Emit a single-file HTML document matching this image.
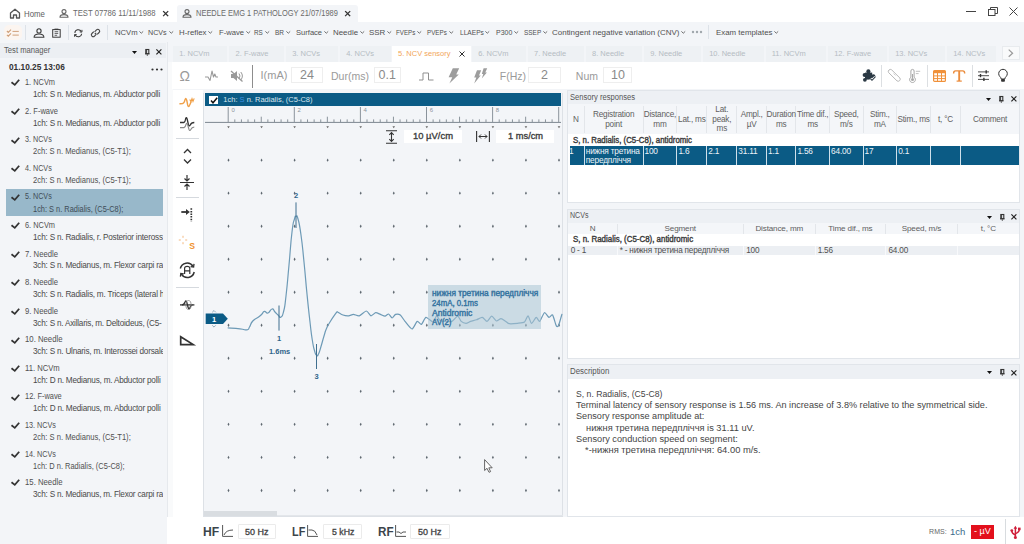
<!DOCTYPE html>
<html><head><meta charset="utf-8">
<style>
*{box-sizing:border-box;margin:0;padding:0}
html,body{width:1024px;height:544px;overflow:hidden;background:#fff;font-family:"Liberation Sans",sans-serif;color:#333}
.a{position:absolute;white-space:nowrap}
svg.a{overflow:visible}
</style></head><body>
<div class="a" style="left:0;top:0;width:1024px;height:22px;background:#fff"></div>
<svg class="a" style="left:9px;top:8px" width="12" height="11" viewBox="0 0 12 11"><path d="M1.5 5 L6 1.2 L10.5 5 V10 H7.5 V7 H4.5 V10 H1.5 Z" fill="none" stroke="#555" stroke-width="1.3" stroke-linejoin="round"/></svg>
<svg class="a" style="left:24.40px;top:4.70px" width="20.90" height="17.20" viewBox="0 0 20.90 17.20"><text x="0" y="11.68" font-family="Liberation Sans" font-size="8.6" font-weight="normal" fill="#606060" textLength="20.90" lengthAdjust="spacingAndGlyphs">Home</text></svg>
<svg class="a" style="left:58.5px;top:9.2px" width="10" height="9" viewBox="0 0 10 9"><circle cx="5" cy="2.6" r="2" fill="none" stroke="#666" stroke-width="1.1"/><path d="M1 8.3 Q1 5.6 5 5.6 Q9 5.6 9 8.3 Z" fill="none" stroke="#666" stroke-width="1.1" stroke-linejoin="round"/></svg>
<svg class="a" style="left:72.70px;top:4.90px" width="82.60" height="16.80" viewBox="0 0 82.60 16.80"><text x="0" y="11.41" font-family="Liberation Sans" font-size="8.4" font-weight="normal" fill="#6a6a6a" textLength="82.60" lengthAdjust="spacingAndGlyphs">TEST 07786 11/11/1988</text></svg>
<svg class="a" style="left:163px;top:10.5px" width="5.3" height="5.3" viewBox="0 0 10 10"><path d="M1 1 L9 9 M9 1 L1 9" stroke="#333" stroke-width="2.26" stroke-linecap="square"/></svg>
<div class="a" style="left:177px;top:5px;width:181px;height:17px;background:#f3f5f8;border-radius:3px 3px 0 0"></div>
<svg class="a" style="left:182px;top:9.2px" width="10" height="9" viewBox="0 0 10 9"><circle cx="5" cy="2.6" r="2" fill="none" stroke="#666" stroke-width="1.1"/><path d="M1 8.3 Q1 5.6 5 5.6 Q9 5.6 9 8.3 Z" fill="none" stroke="#666" stroke-width="1.1" stroke-linejoin="round"/></svg>
<svg class="a" style="left:195.60px;top:4.90px" width="141.90" height="16.80" viewBox="0 0 141.90 16.80"><text x="0" y="11.41" font-family="Liberation Sans" font-size="8.4" font-weight="normal" fill="#6a6a6a" textLength="141.90" lengthAdjust="spacingAndGlyphs">NEEDLE EMG 1 PATHOLOGY 21/07/1989</text></svg>
<svg class="a" style="left:344.8px;top:10.5px" width="5.3" height="5.3" viewBox="0 0 10 10"><path d="M1 1 L9 9 M9 1 L1 9" stroke="#333" stroke-width="2.26" stroke-linecap="square"/></svg>
<div class="a" style="left:966px;top:10.5px;width:10px;height:1px;background:#444"></div>
<svg class="a" style="left:987.5px;top:7px" width="10" height="9" viewBox="0 0 10 9"><rect x="0.5" y="2.5" width="6.5" height="6" fill="none" stroke="#444" stroke-width="1"/><path d="M2.5 2.5 V0.5 H9.5 V6.5 H7" fill="none" stroke="#444" stroke-width="1"/></svg>
<svg class="a" style="left:1009px;top:7px" width="9" height="9" viewBox="0 0 9 9"><path d="M0.5 0.5 L8.5 8.5 M8.5 0.5 L0.5 8.5" stroke="#444" stroke-width="1"/></svg>
<div class="a" style="left:0;top:22px;width:1024px;height:20px;background:#f3f5f8"></div>
<div class="a" style="left:4px;top:25px;width:18px;height:15px;border-radius:5px;background:#fcf5f0"></div>
<svg class="a" style="left:0;top:22px" width="110" height="20" viewBox="0 22 110 20"><path d="M6.9 31 L8.3 32.4 L11 29.6 M6.9 34.8 L8.3 36.2 L11 33.4" fill="none" stroke="#d0a07a" stroke-width="1.1"/><path d="M12.5 31.4 H18.8 M12.5 35.1 H18.8" stroke="#d0a07a" stroke-width="1"/><circle cx="39" cy="30.9" r="2.1" fill="none" stroke="#3a3a3a" stroke-width="1.1"/><path d="M34.1 37.3 Q34.1 34 39 34 Q43.9 34 43.9 37.3 Z" fill="none" stroke="#3a3a3a" stroke-width="1.1" stroke-linejoin="round"/><rect x="52.7" y="29.6" width="7.5" height="7.6" fill="none" stroke="#3a3a3a" stroke-width="1"/><path d="M54.5 29.3 H58.4" stroke="#3a3a3a" stroke-width="1.3"/><path d="M54.6 31.7 H58.2 M54.6 33.4 H58.2 M54.6 35.3 H57.2" stroke="#3a3a3a" stroke-width="0.8"/></svg>
<div class="a" style="left:25.4px;top:24.5px;width:1px;height:15px;background:#dde2e8"></div>
<div class="a" style="left:67.9px;top:24.5px;width:1px;height:15px;background:#dde2e8"></div>
<svg class="a" style="left:72.8px;top:29.2px" width="10.5" height="8.6" viewBox="0 0 11 10"><path d="M1.5 4.5 A4 4 0 0 1 9 3" fill="none" stroke="#333" stroke-width="1.2"/><path d="M9.5 5.5 A4 4 0 0 1 2 7" fill="none" stroke="#333" stroke-width="1.2"/><path d="M7.2 3.4 L9.8 3.6 L9.8 1" fill="none" stroke="#333" stroke-width="1.1"/><path d="M3.8 6.6 L1.2 6.4 L1.2 9" fill="none" stroke="#333" stroke-width="1.1"/></svg>
<svg class="a" style="left:89.5px;top:27.5px" width="11" height="10" viewBox="0 0 11 10"><path d="M4.8 6.2 L6.2 4.8" stroke="#444" stroke-width="1.1"/><path d="M3.8 3.6 L1.9 5.5 A1.8 1.8 0 0 0 4.5 8.1 L6.4 6.2" fill="none" stroke="#444" stroke-width="1.1"/><path d="M7.2 6.4 L9.1 4.5 A1.8 1.8 0 0 0 6.5 1.9 L4.6 3.8" fill="none" stroke="#444" stroke-width="1.1"/></svg>
<div class="a" style="left:106.7px;top:24.5px;width:1px;height:15px;background:#dde2e8"></div>
<svg class="a" style="left:114.60px;top:24.30px" width="22.60" height="15.60" viewBox="0 0 22.60 15.60"><text x="0" y="10.59" font-family="Liberation Sans" font-size="7.8" font-weight="normal" fill="#505050" textLength="22.60" lengthAdjust="spacingAndGlyphs">NCVm</text></svg>
<svg class="a" style="left:139.0px;top:31.4px" width="4.6" height="2.6" viewBox="0 0 4.6 2.6"><path d="M0.4 0.4 L2.3 2.2 L4.2 0.4" fill="none" stroke="#555" stroke-width="0.85"/></svg>
<svg class="a" style="left:148.30px;top:24.30px" width="18.70" height="15.60" viewBox="0 0 18.70 15.60"><text x="0" y="10.59" font-family="Liberation Sans" font-size="7.8" font-weight="normal" fill="#505050" textLength="18.70" lengthAdjust="spacingAndGlyphs">NCVs</text></svg>
<svg class="a" style="left:168.8px;top:31.4px" width="4.6" height="2.6" viewBox="0 0 4.6 2.6"><path d="M0.4 0.4 L2.3 2.2 L4.2 0.4" fill="none" stroke="#555" stroke-width="0.85"/></svg>
<svg class="a" style="left:179.10px;top:24.30px" width="27.50" height="15.60" viewBox="0 0 27.50 15.60"><text x="0" y="10.59" font-family="Liberation Sans" font-size="7.8" font-weight="normal" fill="#505050" textLength="27.50" lengthAdjust="spacingAndGlyphs">H-reflex</text></svg>
<svg class="a" style="left:208.4px;top:31.4px" width="4.6" height="2.6" viewBox="0 0 4.6 2.6"><path d="M0.4 0.4 L2.3 2.2 L4.2 0.4" fill="none" stroke="#555" stroke-width="0.85"/></svg>
<svg class="a" style="left:218.70px;top:24.30px" width="25.10" height="15.60" viewBox="0 0 25.10 15.60"><text x="0" y="10.59" font-family="Liberation Sans" font-size="7.8" font-weight="normal" fill="#505050" textLength="25.10" lengthAdjust="spacingAndGlyphs">F-wave</text></svg>
<svg class="a" style="left:245.6px;top:31.4px" width="4.6" height="2.6" viewBox="0 0 4.6 2.6"><path d="M0.4 0.4 L2.3 2.2 L4.2 0.4" fill="none" stroke="#555" stroke-width="0.85"/></svg>
<svg class="a" style="left:254.40px;top:24.30px" width="8.80" height="15.60" viewBox="0 0 8.80 15.60"><text x="0" y="10.59" font-family="Liberation Sans" font-size="7.8" font-weight="normal" fill="#505050" textLength="8.80" lengthAdjust="spacingAndGlyphs">RS</text></svg>
<svg class="a" style="left:265.0px;top:31.4px" width="4.6" height="2.6" viewBox="0 0 4.6 2.6"><path d="M0.4 0.4 L2.3 2.2 L4.2 0.4" fill="none" stroke="#555" stroke-width="0.85"/></svg>
<svg class="a" style="left:275.20px;top:24.30px" width="9.00" height="15.60" viewBox="0 0 9.00 15.60"><text x="0" y="10.59" font-family="Liberation Sans" font-size="7.8" font-weight="normal" fill="#505050" textLength="9.00" lengthAdjust="spacingAndGlyphs">BR</text></svg>
<svg class="a" style="left:286.0px;top:31.4px" width="4.6" height="2.6" viewBox="0 0 4.6 2.6"><path d="M0.4 0.4 L2.3 2.2 L4.2 0.4" fill="none" stroke="#555" stroke-width="0.85"/></svg>
<svg class="a" style="left:295.70px;top:24.30px" width="26.10" height="15.60" viewBox="0 0 26.10 15.60"><text x="0" y="10.59" font-family="Liberation Sans" font-size="7.8" font-weight="normal" fill="#505050" textLength="26.10" lengthAdjust="spacingAndGlyphs">Surface</text></svg>
<svg class="a" style="left:323.6px;top:31.4px" width="4.6" height="2.6" viewBox="0 0 4.6 2.6"><path d="M0.4 0.4 L2.3 2.2 L4.2 0.4" fill="none" stroke="#555" stroke-width="0.85"/></svg>
<svg class="a" style="left:333.00px;top:24.30px" width="25.10" height="15.60" viewBox="0 0 25.10 15.60"><text x="0" y="10.59" font-family="Liberation Sans" font-size="7.8" font-weight="normal" fill="#505050" textLength="25.10" lengthAdjust="spacingAndGlyphs">Needle</text></svg>
<svg class="a" style="left:359.9px;top:31.4px" width="4.6" height="2.6" viewBox="0 0 4.6 2.6"><path d="M0.4 0.4 L2.3 2.2 L4.2 0.4" fill="none" stroke="#555" stroke-width="0.85"/></svg>
<svg class="a" style="left:369.00px;top:24.30px" width="16.30" height="15.60" viewBox="0 0 16.30 15.60"><text x="0" y="10.59" font-family="Liberation Sans" font-size="7.8" font-weight="normal" fill="#505050" textLength="16.30" lengthAdjust="spacingAndGlyphs">SSR</text></svg>
<svg class="a" style="left:387.1px;top:31.4px" width="4.6" height="2.6" viewBox="0 0 4.6 2.6"><path d="M0.4 0.4 L2.3 2.2 L4.2 0.4" fill="none" stroke="#555" stroke-width="0.85"/></svg>
<svg class="a" style="left:395.50px;top:24.30px" width="19.30" height="15.60" viewBox="0 0 19.30 15.60"><text x="0" y="10.59" font-family="Liberation Sans" font-size="7.8" font-weight="normal" fill="#505050" textLength="19.30" lengthAdjust="spacingAndGlyphs">FVEPs</text></svg>
<svg class="a" style="left:416.6px;top:31.4px" width="4.6" height="2.6" viewBox="0 0 4.6 2.6"><path d="M0.4 0.4 L2.3 2.2 L4.2 0.4" fill="none" stroke="#555" stroke-width="0.85"/></svg>
<svg class="a" style="left:427.00px;top:24.30px" width="19.80" height="15.60" viewBox="0 0 19.80 15.60"><text x="0" y="10.59" font-family="Liberation Sans" font-size="7.8" font-weight="normal" fill="#505050" textLength="19.80" lengthAdjust="spacingAndGlyphs">PVEPs</text></svg>
<svg class="a" style="left:448.6px;top:31.4px" width="4.6" height="2.6" viewBox="0 0 4.6 2.6"><path d="M0.4 0.4 L2.3 2.2 L4.2 0.4" fill="none" stroke="#555" stroke-width="0.85"/></svg>
<svg class="a" style="left:459.50px;top:24.30px" width="23.90" height="15.60" viewBox="0 0 23.90 15.60"><text x="0" y="10.59" font-family="Liberation Sans" font-size="7.8" font-weight="normal" fill="#505050" textLength="23.90" lengthAdjust="spacingAndGlyphs">LLAEPs</text></svg>
<svg class="a" style="left:485.2px;top:31.4px" width="4.6" height="2.6" viewBox="0 0 4.6 2.6"><path d="M0.4 0.4 L2.3 2.2 L4.2 0.4" fill="none" stroke="#555" stroke-width="0.85"/></svg>
<svg class="a" style="left:495.50px;top:24.30px" width="16.30" height="15.60" viewBox="0 0 16.30 15.60"><text x="0" y="10.59" font-family="Liberation Sans" font-size="7.8" font-weight="normal" fill="#505050" textLength="16.30" lengthAdjust="spacingAndGlyphs">P300</text></svg>
<svg class="a" style="left:513.6px;top:31.4px" width="4.6" height="2.6" viewBox="0 0 4.6 2.6"><path d="M0.4 0.4 L2.3 2.2 L4.2 0.4" fill="none" stroke="#555" stroke-width="0.85"/></svg>
<svg class="a" style="left:524.00px;top:24.30px" width="17.20" height="15.60" viewBox="0 0 17.20 15.60"><text x="0" y="10.59" font-family="Liberation Sans" font-size="7.8" font-weight="normal" fill="#505050" textLength="17.20" lengthAdjust="spacingAndGlyphs">SSEP</text></svg>
<svg class="a" style="left:543.0px;top:31.4px" width="4.6" height="2.6" viewBox="0 0 4.6 2.6"><path d="M0.4 0.4 L2.3 2.2 L4.2 0.4" fill="none" stroke="#555" stroke-width="0.85"/></svg>
<svg class="a" style="left:552.00px;top:24.30px" width="127.50" height="15.60" viewBox="0 0 127.50 15.60"><text x="0" y="10.59" font-family="Liberation Sans" font-size="7.8" font-weight="normal" fill="#505050" textLength="127.50" lengthAdjust="spacingAndGlyphs">Contingent negative variation (CNV)</text></svg>
<svg class="a" style="left:681.3px;top:31.4px" width="4.6" height="2.6" viewBox="0 0 4.6 2.6"><path d="M0.4 0.4 L2.3 2.2 L4.2 0.4" fill="none" stroke="#555" stroke-width="0.85"/></svg>
<svg class="a" style="left:716.00px;top:24.30px" width="56.50" height="15.60" viewBox="0 0 56.50 15.60"><text x="0" y="10.59" font-family="Liberation Sans" font-size="7.8" font-weight="normal" fill="#505050" textLength="56.50" lengthAdjust="spacingAndGlyphs">Exam templates</text></svg>
<svg class="a" style="left:774.3px;top:31.4px" width="4.6" height="2.6" viewBox="0 0 4.6 2.6"><path d="M0.4 0.4 L2.3 2.2 L4.2 0.4" fill="none" stroke="#555" stroke-width="0.85"/></svg>
<svg class="a" style="left:690.5px;top:30px" width="12" height="4" viewBox="0 0 12 4"><circle cx="2" cy="2" r="1.2" fill="#a0a7ad"/><circle cx="6" cy="2" r="1.2" fill="#a0a7ad"/><circle cx="10" cy="2" r="1.2" fill="#a0a7ad"/></svg>
<div class="a" style="left:708px;top:25px;width:1px;height:14px;background:#dde2e8"></div>
<div class="a" style="left:0;top:42px;width:167.5px;height:502px;background:#f3f5f8;border-right:1px solid #e6e9ed"></div>
<div class="a" style="left:0;top:43px;width:166px;height:15px;background:#eceff3"></div>
<svg class="a" style="left:3.50px;top:41.90px" width="46.30" height="16.80" viewBox="0 0 46.30 16.80"><text x="0" y="11.41" font-family="Liberation Sans" font-size="8.4" font-weight="normal" fill="#5a5a5a" textLength="46.30" lengthAdjust="spacingAndGlyphs">Test manager</text></svg>
<svg class="a" style="left:132.0px;top:50.5px" width="5" height="3" viewBox="0 0 5 3"><path d="M0 0 H5 L2.5 3 Z" fill="#111"/></svg><svg class="a" style="left:144.8px;top:48.8px" width="4.6" height="7" viewBox="0 0 4.6 7"><rect x="0.8" y="0.5" width="3" height="4.2" fill="none" stroke="#333" stroke-width="1.1"/><path d="M0 4.8 H4.6" stroke="#333" stroke-width="0.9"/><path d="M2.3 4.8 V7" stroke="#555" stroke-width="0.9"/><path d="M1.6 1 V4.5" stroke="#333" stroke-width="0.9"/></svg><svg class="a" style="left:156.4px;top:49.1px" width="5.8" height="5.8" viewBox="0 0 5.8 5.8"><path d="M0.4 0.4 L5.4 5.4 M5.4 0.4 L0.4 5.4" stroke="#222" stroke-width="1.15"/></svg>
<div class="a" style="left:9px;top:63.02px;font-size:8.3px;line-height:9.96px;color:#333;font-weight:bold;">01.10.25 13:06</div>
<svg class="a" style="left:150.5px;top:67.5px" width="12" height="3" viewBox="0 0 12 3"><circle cx="1.5" cy="1.5" r="1.1" fill="#333"/><circle cx="6" cy="1.5" r="1.1" fill="#333"/><circle cx="10.5" cy="1.5" r="1.1" fill="#333"/></svg>
<svg class="a" style="left:0;top:72.40px" width="24" height="20" viewBox="0 72.40 24 20"><path d="M11.5 82.60 L14.8 85.30 L19.2 80.10" fill="none" stroke="#333" stroke-width="1.75"/></svg>
<svg class="a" style="left:24.50px;top:74.20px" width="30.00" height="16.40" viewBox="0 0 30.00 16.40"><text x="0" y="11.14" font-family="Liberation Sans" font-size="8.2" font-weight="normal" fill="#505050" textLength="30.00" lengthAdjust="spacingAndGlyphs">1. NCVm</text></svg>
<div class="a" style="left:33px;top:89.0px;width:129.6px;overflow:hidden;font-size:8.2px;letter-spacing:-0.22px;line-height:11px;color:#4a4a4a">1ch: S n. Medianus, m. Abductor polli</div>
<svg class="a" style="left:0;top:100.97px" width="24" height="20" viewBox="0 100.97 24 20"><path d="M11.5 111.17 L14.8 113.87 L19.2 108.67" fill="none" stroke="#333" stroke-width="1.75"/></svg>
<svg class="a" style="left:24.50px;top:102.77px" width="33.00" height="16.40" viewBox="0 0 33.00 16.40"><text x="0" y="11.14" font-family="Liberation Sans" font-size="8.2" font-weight="normal" fill="#505050" textLength="33.00" lengthAdjust="spacingAndGlyphs">2. F-wave</text></svg>
<div class="a" style="left:33px;top:117.6px;width:129.6px;overflow:hidden;font-size:8.2px;letter-spacing:-0.22px;line-height:11px;color:#4a4a4a">1ch: S n. Medianus, m. Abductor polli</div>
<svg class="a" style="left:0;top:129.54px" width="24" height="20" viewBox="0 129.54 24 20"><path d="M11.5 139.74 L14.8 142.44 L19.2 137.24" fill="none" stroke="#333" stroke-width="1.75"/></svg>
<svg class="a" style="left:24.50px;top:131.34px" width="26.75" height="16.40" viewBox="0 0 26.75 16.40"><text x="0" y="11.14" font-family="Liberation Sans" font-size="8.2" font-weight="normal" fill="#505050" textLength="26.75" lengthAdjust="spacingAndGlyphs">3. NCVs</text></svg>
<svg class="a" style="left:32.70px;top:143.44px" width="97.80" height="16.40" viewBox="0 0 97.80 16.40"><text x="0" y="11.14" font-family="Liberation Sans" font-size="8.2" font-weight="normal" fill="#505050" textLength="97.80" lengthAdjust="spacingAndGlyphs">2ch: S n. Medianus, (C5-T1);</text></svg>
<svg class="a" style="left:0;top:158.11px" width="24" height="20" viewBox="0 158.11 24 20"><path d="M11.5 168.31 L14.8 171.01 L19.2 165.81" fill="none" stroke="#333" stroke-width="1.75"/></svg>
<svg class="a" style="left:24.50px;top:159.91px" width="26.75" height="16.40" viewBox="0 0 26.75 16.40"><text x="0" y="11.14" font-family="Liberation Sans" font-size="8.2" font-weight="normal" fill="#505050" textLength="26.75" lengthAdjust="spacingAndGlyphs">4. NCVs</text></svg>
<svg class="a" style="left:32.70px;top:172.01px" width="97.80" height="16.40" viewBox="0 0 97.80 16.40"><text x="0" y="11.14" font-family="Liberation Sans" font-size="8.2" font-weight="normal" fill="#505050" textLength="97.80" lengthAdjust="spacingAndGlyphs">2ch: S n. Medianus, (C5-T1);</text></svg>
<div class="a" style="left:6px;top:189.3px;width:156.7px;height:26.6px;background:#98b8ca"></div>
<svg class="a" style="left:0;top:186.68px" width="24" height="20" viewBox="0 186.68 24 20"><path d="M11.5 196.88 L14.8 199.58 L19.2 194.38" fill="none" stroke="#333" stroke-width="1.75"/></svg>
<svg class="a" style="left:24.50px;top:188.48px" width="26.75" height="16.40" viewBox="0 0 26.75 16.40"><text x="0" y="11.14" font-family="Liberation Sans" font-size="8.2" font-weight="normal" fill="#3f4d57" textLength="26.75" lengthAdjust="spacingAndGlyphs">5. NCVs</text></svg>
<svg class="a" style="left:32.70px;top:200.58px" width="90.30" height="16.40" viewBox="0 0 90.30 16.40"><text x="0" y="11.14" font-family="Liberation Sans" font-size="8.2" font-weight="normal" fill="#3f4d57" textLength="90.30" lengthAdjust="spacingAndGlyphs">1ch: S n. Radialis, (C5-C8);</text></svg>
<svg class="a" style="left:0;top:215.25px" width="24" height="20" viewBox="0 215.25 24 20"><path d="M11.5 225.45 L14.8 228.15 L19.2 222.95" fill="none" stroke="#333" stroke-width="1.75"/></svg>
<svg class="a" style="left:24.50px;top:217.05px" width="30.00" height="16.40" viewBox="0 0 30.00 16.40"><text x="0" y="11.14" font-family="Liberation Sans" font-size="8.2" font-weight="normal" fill="#505050" textLength="30.00" lengthAdjust="spacingAndGlyphs">6. NCVm</text></svg>
<div class="a" style="left:33px;top:231.8px;width:129.6px;overflow:hidden;font-size:8.2px;letter-spacing:-0.22px;line-height:11px;color:#4a4a4a">1ch: S n. Radialis, r. Posterior inteross</div>
<svg class="a" style="left:0;top:243.82px" width="24" height="20" viewBox="0 243.82 24 20"><path d="M11.5 254.02 L14.8 256.72 L19.2 251.52" fill="none" stroke="#333" stroke-width="1.75"/></svg>
<svg class="a" style="left:24.50px;top:245.62px" width="33.00" height="16.40" viewBox="0 0 33.00 16.40"><text x="0" y="11.14" font-family="Liberation Sans" font-size="8.2" font-weight="normal" fill="#505050" textLength="33.00" lengthAdjust="spacingAndGlyphs">7. Needle</text></svg>
<div class="a" style="left:33px;top:260.4px;width:129.6px;overflow:hidden;font-size:8.2px;letter-spacing:-0.22px;line-height:11px;color:#4a4a4a">3ch: S n. Medianus, m. Flexor carpi ra</div>
<svg class="a" style="left:0;top:272.39px" width="24" height="20" viewBox="0 272.39 24 20"><path d="M11.5 282.59 L14.8 285.29 L19.2 280.09" fill="none" stroke="#333" stroke-width="1.75"/></svg>
<svg class="a" style="left:24.50px;top:274.19px" width="33.00" height="16.40" viewBox="0 0 33.00 16.40"><text x="0" y="11.14" font-family="Liberation Sans" font-size="8.2" font-weight="normal" fill="#505050" textLength="33.00" lengthAdjust="spacingAndGlyphs">8. Needle</text></svg>
<div class="a" style="left:33px;top:289.0px;width:129.6px;overflow:hidden;font-size:8.2px;letter-spacing:-0.22px;line-height:11px;color:#4a4a4a">3ch: S n. Radialis, m. Triceps (lateral h</div>
<svg class="a" style="left:0;top:300.96px" width="24" height="20" viewBox="0 300.96 24 20"><path d="M11.5 311.16 L14.8 313.86 L19.2 308.66" fill="none" stroke="#333" stroke-width="1.75"/></svg>
<svg class="a" style="left:24.50px;top:302.76px" width="33.00" height="16.40" viewBox="0 0 33.00 16.40"><text x="0" y="11.14" font-family="Liberation Sans" font-size="8.2" font-weight="normal" fill="#505050" textLength="33.00" lengthAdjust="spacingAndGlyphs">9. Needle</text></svg>
<div class="a" style="left:33px;top:317.6px;width:129.6px;overflow:hidden;font-size:8.2px;letter-spacing:-0.22px;line-height:11px;color:#4a4a4a">3ch: S n. Axillaris, m. Deltoideus, (C5-</div>
<svg class="a" style="left:0;top:329.53px" width="24" height="20" viewBox="0 329.53 24 20"><path d="M11.5 339.73 L14.8 342.43 L19.2 337.23" fill="none" stroke="#333" stroke-width="1.75"/></svg>
<svg class="a" style="left:24.50px;top:331.33px" width="37.50" height="16.40" viewBox="0 0 37.50 16.40"><text x="0" y="11.14" font-family="Liberation Sans" font-size="8.2" font-weight="normal" fill="#505050" textLength="37.50" lengthAdjust="spacingAndGlyphs">10. Needle</text></svg>
<div class="a" style="left:33px;top:346.1px;width:129.6px;overflow:hidden;font-size:8.2px;letter-spacing:-0.22px;line-height:11px;color:#4a4a4a">3ch: S n. Ulnaris, m. Interossei dorsale</div>
<svg class="a" style="left:0;top:358.10px" width="24" height="20" viewBox="0 358.10 24 20"><path d="M11.5 368.30 L14.8 371.00 L19.2 365.80" fill="none" stroke="#333" stroke-width="1.75"/></svg>
<svg class="a" style="left:24.50px;top:359.90px" width="34.75" height="16.40" viewBox="0 0 34.75 16.40"><text x="0" y="11.14" font-family="Liberation Sans" font-size="8.2" font-weight="normal" fill="#505050" textLength="34.75" lengthAdjust="spacingAndGlyphs">11. NCVm</text></svg>
<div class="a" style="left:33px;top:374.7px;width:129.6px;overflow:hidden;font-size:8.2px;letter-spacing:-0.22px;line-height:11px;color:#4a4a4a">1ch: D n. Medianus, m. Abductor polli</div>
<svg class="a" style="left:0;top:386.67px" width="24" height="20" viewBox="0 386.67 24 20"><path d="M11.5 396.87 L14.8 399.57 L19.2 394.37" fill="none" stroke="#333" stroke-width="1.75"/></svg>
<svg class="a" style="left:24.50px;top:388.47px" width="36.75" height="16.40" viewBox="0 0 36.75 16.40"><text x="0" y="11.14" font-family="Liberation Sans" font-size="8.2" font-weight="normal" fill="#505050" textLength="36.75" lengthAdjust="spacingAndGlyphs">12. F-wave</text></svg>
<div class="a" style="left:33px;top:403.3px;width:129.6px;overflow:hidden;font-size:8.2px;letter-spacing:-0.22px;line-height:11px;color:#4a4a4a">1ch: D n. Medianus, m. Abductor polli</div>
<svg class="a" style="left:0;top:415.24px" width="24" height="20" viewBox="0 415.24 24 20"><path d="M11.5 425.44 L14.8 428.14 L19.2 422.94" fill="none" stroke="#333" stroke-width="1.75"/></svg>
<svg class="a" style="left:24.50px;top:417.04px" width="31.00" height="16.40" viewBox="0 0 31.00 16.40"><text x="0" y="11.14" font-family="Liberation Sans" font-size="8.2" font-weight="normal" fill="#505050" textLength="31.00" lengthAdjust="spacingAndGlyphs">13. NCVs</text></svg>
<svg class="a" style="left:32.70px;top:429.14px" width="97.80" height="16.40" viewBox="0 0 97.80 16.40"><text x="0" y="11.14" font-family="Liberation Sans" font-size="8.2" font-weight="normal" fill="#505050" textLength="97.80" lengthAdjust="spacingAndGlyphs">2ch: S n. Medianus, (C5-T1);</text></svg>
<svg class="a" style="left:0;top:443.81px" width="24" height="20" viewBox="0 443.81 24 20"><path d="M11.5 454.01 L14.8 456.71 L19.2 451.51" fill="none" stroke="#333" stroke-width="1.75"/></svg>
<svg class="a" style="left:24.50px;top:445.61px" width="31.00" height="16.40" viewBox="0 0 31.00 16.40"><text x="0" y="11.14" font-family="Liberation Sans" font-size="8.2" font-weight="normal" fill="#505050" textLength="31.00" lengthAdjust="spacingAndGlyphs">14. NCVs</text></svg>
<svg class="a" style="left:32.70px;top:457.71px" width="91.55" height="16.40" viewBox="0 0 91.55 16.40"><text x="0" y="11.14" font-family="Liberation Sans" font-size="8.2" font-weight="normal" fill="#505050" textLength="91.55" lengthAdjust="spacingAndGlyphs">1ch: D n. Radialis, (C5-C8);</text></svg>
<svg class="a" style="left:0;top:472.38px" width="24" height="20" viewBox="0 472.38 24 20"><path d="M11.5 482.58 L14.8 485.28 L19.2 480.08" fill="none" stroke="#333" stroke-width="1.75"/></svg>
<svg class="a" style="left:24.50px;top:474.18px" width="37.50" height="16.40" viewBox="0 0 37.50 16.40"><text x="0" y="11.14" font-family="Liberation Sans" font-size="8.2" font-weight="normal" fill="#505050" textLength="37.50" lengthAdjust="spacingAndGlyphs">15. Needle</text></svg>
<div class="a" style="left:33px;top:489.0px;width:129.6px;overflow:hidden;font-size:8.2px;letter-spacing:-0.22px;line-height:11px;color:#4a4a4a">3ch: S n. Medianus, m. Flexor carpi ra</div>
<div class="a" style="left:167.5px;top:42px;width:856.5px;height:476px;background:#f3f5f8"></div>
<div class="a" style="left:167.5px;top:62px;width:5px;height:482px;background:#f9fafb"></div>
<div class="a" style="left:173px;top:45.8px;width:54.0px;height:16.6px;background:#eef1f4"></div>
<div class="a" style="left:179.2px;top:49.30px;font-size:7.5px;line-height:9.00px;color:#b5bcc3;font-weight:normal;">1. NCVm</div>
<div class="a" style="left:229.4px;top:45.8px;width:54.6px;height:16.6px;background:#eef1f4"></div>
<div class="a" style="left:235.6px;top:49.30px;font-size:7.5px;line-height:9.00px;color:#b5bcc3;font-weight:normal;">2. F-wave</div>
<div class="a" style="left:286px;top:45.8px;width:51.8px;height:16.6px;background:#eef1f4"></div>
<div class="a" style="left:292.2px;top:49.30px;font-size:7.5px;line-height:9.00px;color:#b5bcc3;font-weight:normal;">3. NCVs</div>
<div class="a" style="left:340px;top:45.8px;width:51.0px;height:16.6px;background:#eef1f4"></div>
<div class="a" style="left:346.2px;top:49.30px;font-size:7.5px;line-height:9.00px;color:#b5bcc3;font-weight:normal;">4. NCVs</div>
<div class="a" style="left:392px;top:45.5px;width:79.0px;height:17px;background:#fff"></div>
<div class="a" style="left:398px;top:49.30px;font-size:7.5px;line-height:9.00px;color:#f2a65a;font-weight:normal;">5. NCV sensory</div>
<svg class="a" style="left:459px;top:51px" width="6" height="6" viewBox="0 0 6 6"><path d="M0.5 0.5 L5.5 5.5 M5.5 0.5 L0.5 5.5" stroke="#333" stroke-width="1"/></svg>
<div class="a" style="left:472px;top:45.8px;width:54.0px;height:16.6px;background:#eef1f4"></div>
<div class="a" style="left:478.2px;top:49.30px;font-size:7.5px;line-height:9.00px;color:#b5bcc3;font-weight:normal;">6. NCVm</div>
<div class="a" style="left:527.8px;top:45.8px;width:56.2px;height:16.6px;background:#eef1f4"></div>
<div class="a" style="left:534.0px;top:49.30px;font-size:7.5px;line-height:9.00px;color:#b5bcc3;font-weight:normal;">7. Needle</div>
<div class="a" style="left:585.8px;top:45.8px;width:56.2px;height:16.6px;background:#eef1f4"></div>
<div class="a" style="left:592.0px;top:49.30px;font-size:7.5px;line-height:9.00px;color:#b5bcc3;font-weight:normal;">8. Needle</div>
<div class="a" style="left:644px;top:45.8px;width:57.0px;height:16.6px;background:#eef1f4"></div>
<div class="a" style="left:650.2px;top:49.30px;font-size:7.5px;line-height:9.00px;color:#b5bcc3;font-weight:normal;">9. Needle</div>
<div class="a" style="left:703px;top:45.8px;width:60.5px;height:16.6px;background:#eef1f4"></div>
<div class="a" style="left:709.2px;top:49.30px;font-size:7.5px;line-height:9.00px;color:#b5bcc3;font-weight:normal;">10. Needle</div>
<div class="a" style="left:765.5px;top:45.8px;width:60.3px;height:16.6px;background:#eef1f4"></div>
<div class="a" style="left:771.7px;top:49.30px;font-size:7.5px;line-height:9.00px;color:#b5bcc3;font-weight:normal;">11. NCVm</div>
<div class="a" style="left:828px;top:45.8px;width:59.0px;height:16.6px;background:#eef1f4"></div>
<div class="a" style="left:834.2px;top:49.30px;font-size:7.5px;line-height:9.00px;color:#b5bcc3;font-weight:normal;">12. F-wave</div>
<div class="a" style="left:889px;top:45.8px;width:55.5px;height:16.6px;background:#eef1f4"></div>
<div class="a" style="left:895.2px;top:49.30px;font-size:7.5px;line-height:9.00px;color:#b5bcc3;font-weight:normal;">13. NCVs</div>
<div class="a" style="left:947px;top:45.8px;width:48.8px;height:16.6px;background:#eef1f4"></div>
<div class="a" style="left:953.2px;top:49.30px;font-size:7.5px;line-height:9.00px;color:#b5bcc3;font-weight:normal;">14. NCVs</div>
<div class="a" style="left:1002.4px;top:46px;width:17.2px;height:14px;background:#f9fafb;border:1px solid #e8ebee"></div>
<svg class="a" style="left:1008.4px;top:48.8px" width="5.6" height="8.4" viewBox="0 0 5.6 8.4"><path d="M0.7 0.6 L4.6 4.2 L0.7 7.8" fill="none" stroke="#9a9a9a" stroke-width="1.2"/></svg>
<div class="a" style="left:172px;top:62.4px;width:852px;height:26.5px;background:#fff"></div>
<div class="a" style="left:179.5px;top:68px;font-size:14px;line-height:16px;color:#9a9a9a">&#937;</div>
<svg class="a" style="left:205px;top:70px" width="13" height="12" viewBox="0 0 13 12"><path d="M0 7 H3 L5 10.5 L7 1 L8.5 7 L9.8 4 L11 7 H13" fill="none" stroke="#9a9a9a" stroke-width="1.1" stroke-linejoin="round"/></svg>
<svg class="a" style="left:229.5px;top:70px" width="14" height="12" viewBox="0 0 14 12"><path d="M1 4 H3.5 L7 1 V11 L3.5 8 H1 Z" fill="#9a9a9a"/><path d="M9 3.5 Q11 6 9 8.5 M10.8 2 Q14 6 10.8 10" fill="none" stroke="#9a9a9a" stroke-width="1"/><path d="M1 1 L12.5 11.5" stroke="#9a9a9a" stroke-width="1.3"/></svg>
<div class="a" style="left:252px;top:64.5px;width:1px;height:23px;background:#8d8d8d"></div>
<div class="a" style="left:260.5px;top:69.40px;font-size:11px;line-height:13.20px;color:#9a9a9a;font-weight:normal;">I(mA)</div>
<div class="a" style="left:291.3px;top:67.2px;width:31.5px;height:16px;border:1px solid #eeeeee;background:#fff;text-align:center;font-size:12.5px;line-height:15px;color:#8a8a8a">24</div>
<div class="a" style="left:331px;top:69.70px;font-size:10.5px;line-height:12.60px;color:#9a9a9a;font-weight:normal;">Dur(ms)</div>
<div class="a" style="left:374px;top:67.2px;width:26.6px;height:16px;border:1px solid #eeeeee;background:#fff;text-align:center;font-size:12.5px;line-height:15px;color:#8a8a8a">0.1</div>
<svg class="a" style="left:419px;top:71.5px" width="15" height="9" viewBox="0 0 15 9"><path d="M0 8 H4 V1 H9.5 V8 H14.5" fill="none" stroke="#8f8f8f" stroke-width="1"/></svg>
<svg class="a" style="left:440px;top:62px" width="50" height="26" viewBox="440 62 50 26"><path d="M452.8 68.2 H459.2 L456.2 74.6 H458.8 L449.4 83.6 L452.3 77.2 H448.6 Z" fill="#9d9d9d"/><path d="M477 70.3 H481.2 L479 75.4 H480.7 L474.2 83.5 L476.3 77.4 H474.2 Z" fill="#9d9d9d"/><path d="M483.6 68.2 H487.2 L485.3 72.5 H486.9 L481.8 78.4 L483.3 74.1 H481.8 Z" fill="#9d9d9d"/></svg>
<div class="a" style="left:499.8px;top:69.70px;font-size:10.5px;line-height:12.60px;color:#9a9a9a;font-weight:normal;">F(Hz)</div>
<div class="a" style="left:528.3px;top:67.2px;width:32.5px;height:16px;border:1px solid #eeeeee;background:#fff;text-align:center;font-size:12.5px;line-height:15px;color:#8a8a8a">2</div>
<div class="a" style="left:575.8px;top:69.70px;font-size:10.5px;line-height:12.60px;color:#9a9a9a;font-weight:normal;">Num</div>
<div class="a" style="left:603.3px;top:67.2px;width:29.2px;height:16px;border:1px solid #eeeeee;background:#fff;text-align:center;font-size:12.5px;line-height:15px;color:#8a8a8a">10</div>
<svg class="a" style="left:858px;top:64px" width="68" height="24" viewBox="858 64 68 24"><g fill="#2b3944"><rect x="865" y="72.6" width="7.2" height="7"/><circle cx="868.4" cy="71.4" r="2.1"/><circle cx="864.6" cy="75" r="2"/><circle cx="864.9" cy="79.8" r="1.9"/><circle cx="873.4" cy="76.2" r="2"/></g><path d="M870.4 78.6 L872 80.3 L875.3 76.9" fill="none" stroke="#fff" stroke-width="2.6"/><path d="M870.4 78.6 L872 80.3 L875.3 76.9" fill="none" stroke="#2b3944" stroke-width="1.1"/></svg>
<div class="a" style="left:881.4px;top:65px;width:1px;height:21.5px;background:#dcdfe2"></div>
<svg class="a" style="left:858px;top:64px" width="68" height="24" viewBox="858 64 68 24"><path d="M888.6 72.6 A2.1 2.1 0 0 1 891.6 69.8 L899.9 78 A2.1 2.1 0 0 1 897 80.9 Z" fill="none" stroke="#b8b8b8" stroke-width="1"/><path d="M893.5 73.5 L895.5 75.5" stroke="#c8c8c8" stroke-width="0.8"/><path d="M910.9 77.2 V71 A1.6 1.6 0 0 1 914.1 71 V77.2 A2.9 2.9 0 1 1 910.9 77.2 Z" fill="none" stroke="#a8a8a8" stroke-width="1"/><circle cx="912.5" cy="79.4" r="1.5" fill="#a8a8a8"/><path d="M912.5 74 V78" stroke="#a8a8a8" stroke-width="1.1"/><path d="M915.8 71.3 H920.2 M915.8 73.6 H918.6" stroke="#b0b0b0" stroke-width="0.8"/></svg>
<div class="a" style="left:926.8px;top:65px;width:1px;height:21.5px;background:#dcdfe2"></div>
<svg class="a" style="left:932.8px;top:69.8px" width="13" height="12" viewBox="0 0 13 12"><rect x="0.6" y="0.6" width="11.8" height="10.8" rx="1" fill="none" stroke="#f0913a" stroke-width="1.2"/><rect x="0.6" y="0.6" width="11.8" height="2.6" fill="#f0913a"/><path d="M0.6 5.9 H12.4 M0.6 8.6 H12.4 M4.5 3 V11.4 M8.5 3 V11.4" stroke="#f0913a" stroke-width="1"/></svg>
<svg class="a" style="left:948px;top:66px" width="20" height="20" viewBox="948 66 20 20"><path d="M953.6 73.4 Q953.6 70.9 955.5 70.9 H962.8 Q964.7 70.9 964.7 73.4" fill="none" stroke="#eb8c3c" stroke-width="1.4"/><path d="M959.2 71 V81" stroke="#eb8c3c" stroke-width="1.9"/><path d="M956.6 81.1 H961.8" stroke="#eb8c3c" stroke-width="1.2"/></svg>
<div class="a" style="left:971.8px;top:65px;width:1px;height:21.5px;background:#dcdfe2"></div>
<svg class="a" style="left:970px;top:66px" width="50" height="20" viewBox="970 66 50 20"><path d="M978 71.9 H989 M978 75.7 H989 M978 79.4 H989" stroke="#3a3a3a" stroke-width="0.9"/><path d="M986.2 70.3 V73.5 M980.5 74.1 V77.3 M983.9 77.8 V81" stroke="#333" stroke-width="1.4"/><path d="M1001.2 79 Q1001 77.5 999.9 76.6 A4.3 4.3 0 1 1 1006.1 76.6 Q1005 77.5 1004.8 79 Z" fill="none" stroke="#333" stroke-width="1"/><rect x="1001.1" y="79" width="3.8" height="2.7" rx="0.8" fill="#333"/></svg>
<div class="a" style="left:172.5px;top:90.2px;width:30.5px;height:427px;background:#fff"></div>
<svg class="a" style="left:174px;top:92px" width="26" height="42" viewBox="174 92 26 42"><path d="M180 103.8 L182.6 103.5 Q184.2 103.2 185 99.8 Q185.9 97 186.8 100.5 L187.7 105 Q188.3 107.5 189.3 105.8 Q190.2 104 191 102" fill="none" stroke="#f0a048" stroke-width="1.4" stroke-linecap="round"/><path d="M189.8 99.5 L190.9 101.6 L192 98.6 L193 101.4 L194.2 98.4" fill="none" stroke="#f0a048" stroke-width="1.1"/><path d="M180 122.5 H183.8 Q185 122.5 185.7 118.5 Q186.5 116 187.5 120.5 L188.4 124.5 Q189.2 127 190.2 125 Q191.2 122.5 194.3 122.5" fill="none" stroke="#333" stroke-width="1.3"/><path d="M180 127.6 H184 Q185.3 127.3 186.2 124 Q187 122 188 126 L189 129.5 Q189.8 131.5 190.8 129.5 Q191.8 127.2 194.3 127" fill="none" stroke="#888" stroke-width="1.1"/></svg>
<div class="a" style="left:176.2px;top:138.3px;width:22.6px;height:1px;background:#d5d9de"></div>
<svg class="a" style="left:182.5px;top:148px" width="9" height="17" viewBox="0 0 9 17"><path d="M1 5 L4.5 1.5 L8 5 M1 11.5 L4.5 15 L8 11.5" fill="none" stroke="#333" stroke-width="1.3"/></svg>
<svg class="a" style="left:180px;top:174px" width="14" height="17" viewBox="0 0 14 17"><path d="M7 1 V6.5 M4.5 4.5 L7 7 L9.5 4.5 M0 8.5 H14 M7 16 V10.5 M4.5 12.5 L7 10 L9.5 12.5" fill="none" stroke="#333" stroke-width="1.2"/></svg>
<div class="a" style="left:176.2px;top:197.3px;width:22.6px;height:1px;background:#d5d9de"></div>
<svg class="a" style="left:174px;top:200px" width="26" height="82" viewBox="174 200 26 82"><path d="M181.3 212 H187" stroke="#333" stroke-width="1.8"/><path d="M186 209 L189.8 212 L186 215 Z" fill="#333"/><path d="M191.3 208.3 V221.5" stroke="#333" stroke-width="1.7" stroke-dasharray="1.5 1.1"/><path d="M183 235.8 V237.8 M183 242.2 V244.2 M178.8 240 H180.8 M185.2 240 H187.2" stroke="#f3b070" stroke-width="0.9"/><text x="189.3" y="248.6" font-family="Liberation Sans" font-weight="bold" font-size="8.6" fill="#f0922e">S</text><path d="M180.3 268.5 A7 7 0 0 1 193 266.3 M194.2 272 A7 7 0 0 1 181.4 274.2" fill="none" stroke="#333" stroke-width="1.5"/><path d="M190.6 266.6 L193.6 267 L194 263.8 M183.8 273.9 L180.8 273.5 L180.4 276.7" fill="none" stroke="#333" stroke-width="1.3"/><path d="M184.6 274 V268.3 Q184.6 266.3 187.2 266.3 Q189.8 266.3 189.8 268.3 V274 M184.6 270.8 H189.8" fill="none" stroke="#333" stroke-width="1.2"/></svg>
<div class="a" style="left:176.2px;top:287px;width:22.6px;height:1px;background:#d5d9de"></div>
<svg class="a" style="left:174px;top:290px" width="26" height="60" viewBox="174 290 26 60"><path d="M180 304.9 H194.4" stroke="#333" stroke-width="1.3"/><path d="M182 304.9 Q184 304.9 185 302 Q185.8 299.5 186.8 302.5 L188 307 Q189 310.5 190.2 307 Q191 304.9 192.5 304.9" fill="none" stroke="#333" stroke-width="1.3"/><ellipse cx="188.5" cy="305" rx="2.6" ry="4.5" fill="none" stroke="#888" stroke-width="0.8"/><path d="M180.7 336.8 L193.2 344.6 H180.7 Z" fill="none" stroke="#333" stroke-width="1.7" stroke-linejoin="miter"/></svg>
<div class="a" style="left:203px;top:92.5px;width:360.3px;height:424px;background:#f3f5f8;border:1px solid #dde1e6;border-top:none"></div>
<div class="a" style="left:205px;top:93.4px;width:356px;height:12.4px;background:#0b5b85"></div>
<div class="a" style="left:209px;top:96.2px;width:8.8px;height:7.6px;background:#fff"></div>
<svg class="a" style="left:209.5px;top:96.5px" width="8" height="7" viewBox="0 0 8 7"><path d="M1 3.5 L3 5.8 L7.2 0.8" fill="none" stroke="#111" stroke-width="1.5"/></svg>
<div class="a" style="left:223.3px;top:94px;font-size:7.5px;line-height:11px;color:#d9e6ee">1ch: <span style="color:#3b8fe0">S</span> n. Radialis, (C5-C8)</div>
<svg class="a" style="left:205px;top:106px;overflow:hidden" width="356" height="18" viewBox="205 106 356 18"><path d="M205 122.4 H561" stroke="#7d8790" stroke-width="1"/><path d="M228.20 107 V122.4" stroke="#8a939b" stroke-width="1"/><text x="231.40" y="112" font-family="Liberation Sans" font-size="6" fill="#8a939b">0</text><path d="M234.81 119.4 V122.4" stroke="#8a939b" stroke-width="1"/><path d="M241.42 119.4 V122.4" stroke="#8a939b" stroke-width="1"/><path d="M248.03 119.4 V122.4" stroke="#8a939b" stroke-width="1"/><path d="M254.64 119.4 V122.4" stroke="#8a939b" stroke-width="1"/><path d="M261.25 116.7 V122.4" stroke="#8a939b" stroke-width="1"/><path d="M267.86 119.4 V122.4" stroke="#8a939b" stroke-width="1"/><path d="M274.47 119.4 V122.4" stroke="#8a939b" stroke-width="1"/><path d="M281.08 119.4 V122.4" stroke="#8a939b" stroke-width="1"/><path d="M287.69 119.4 V122.4" stroke="#8a939b" stroke-width="1"/><path d="M294.30 107 V122.4" stroke="#8a939b" stroke-width="1"/><text x="297.50" y="112" font-family="Liberation Sans" font-size="6" fill="#8a939b">2</text><path d="M300.91 119.4 V122.4" stroke="#8a939b" stroke-width="1"/><path d="M307.52 119.4 V122.4" stroke="#8a939b" stroke-width="1"/><path d="M314.13 119.4 V122.4" stroke="#8a939b" stroke-width="1"/><path d="M320.74 119.4 V122.4" stroke="#8a939b" stroke-width="1"/><path d="M327.35 116.7 V122.4" stroke="#8a939b" stroke-width="1"/><path d="M333.96 119.4 V122.4" stroke="#8a939b" stroke-width="1"/><path d="M340.57 119.4 V122.4" stroke="#8a939b" stroke-width="1"/><path d="M347.18 119.4 V122.4" stroke="#8a939b" stroke-width="1"/><path d="M353.79 119.4 V122.4" stroke="#8a939b" stroke-width="1"/><path d="M360.40 107 V122.4" stroke="#8a939b" stroke-width="1"/><text x="363.60" y="112" font-family="Liberation Sans" font-size="6" fill="#8a939b">4</text><path d="M367.01 119.4 V122.4" stroke="#8a939b" stroke-width="1"/><path d="M373.62 119.4 V122.4" stroke="#8a939b" stroke-width="1"/><path d="M380.23 119.4 V122.4" stroke="#8a939b" stroke-width="1"/><path d="M386.84 119.4 V122.4" stroke="#8a939b" stroke-width="1"/><path d="M393.45 116.7 V122.4" stroke="#8a939b" stroke-width="1"/><path d="M400.06 119.4 V122.4" stroke="#8a939b" stroke-width="1"/><path d="M406.67 119.4 V122.4" stroke="#8a939b" stroke-width="1"/><path d="M413.28 119.4 V122.4" stroke="#8a939b" stroke-width="1"/><path d="M419.89 119.4 V122.4" stroke="#8a939b" stroke-width="1"/><path d="M426.50 107 V122.4" stroke="#8a939b" stroke-width="1"/><text x="429.70" y="112" font-family="Liberation Sans" font-size="6" fill="#8a939b">6</text><path d="M433.11 119.4 V122.4" stroke="#8a939b" stroke-width="1"/><path d="M439.72 119.4 V122.4" stroke="#8a939b" stroke-width="1"/><path d="M446.33 119.4 V122.4" stroke="#8a939b" stroke-width="1"/><path d="M452.94 119.4 V122.4" stroke="#8a939b" stroke-width="1"/><path d="M459.55 116.7 V122.4" stroke="#8a939b" stroke-width="1"/><path d="M466.16 119.4 V122.4" stroke="#8a939b" stroke-width="1"/><path d="M472.77 119.4 V122.4" stroke="#8a939b" stroke-width="1"/><path d="M479.38 119.4 V122.4" stroke="#8a939b" stroke-width="1"/><path d="M485.99 119.4 V122.4" stroke="#8a939b" stroke-width="1"/><path d="M492.60 107 V122.4" stroke="#8a939b" stroke-width="1"/><text x="495.80" y="112" font-family="Liberation Sans" font-size="6" fill="#8a939b">8</text><path d="M499.21 119.4 V122.4" stroke="#8a939b" stroke-width="1"/><path d="M505.82 119.4 V122.4" stroke="#8a939b" stroke-width="1"/><path d="M512.43 119.4 V122.4" stroke="#8a939b" stroke-width="1"/><path d="M519.04 119.4 V122.4" stroke="#8a939b" stroke-width="1"/><path d="M525.65 116.7 V122.4" stroke="#8a939b" stroke-width="1"/><path d="M532.26 119.4 V122.4" stroke="#8a939b" stroke-width="1"/><path d="M538.87 119.4 V122.4" stroke="#8a939b" stroke-width="1"/><path d="M545.48 119.4 V122.4" stroke="#8a939b" stroke-width="1"/><path d="M552.09 119.4 V122.4" stroke="#8a939b" stroke-width="1"/><path d="M558.70 107 V122.4" stroke="#8a939b" stroke-width="1"/></svg>
<svg class="a" style="left:203px;top:92px" width="362" height="425" viewBox="203 92 362 425"><path d="M227.20 126.30 H229.80 L228.50 128.30 Z" fill="#666"/><path d="M260.25 126.30 H262.85 L261.55 128.30 Z" fill="#666"/><path d="M293.30 126.30 H295.90 L294.60 128.30 Z" fill="#666"/><path d="M326.35 126.30 H328.95 L327.65 128.30 Z" fill="#666"/><path d="M359.40 126.30 H362.00 L360.70 128.30 Z" fill="#666"/><path d="M392.45 126.30 H395.05 L393.75 128.30 Z" fill="#666"/><path d="M425.50 126.30 H428.10 L426.80 128.30 Z" fill="#666"/><path d="M458.55 126.30 H461.15 L459.85 128.30 Z" fill="#666"/><path d="M491.60 126.30 H494.20 L492.90 128.30 Z" fill="#666"/><path d="M524.65 126.30 H527.25 L525.95 128.30 Z" fill="#666"/><path d="M557.70 126.30 H560.30 L559.00 128.30 Z" fill="#666"/><path d="M228.50 158.43 L229.50 160.13 L228.50 161.83 L227.50 160.13 Z" fill="#5f6870"/><path d="M261.55 158.43 L262.55 160.13 L261.55 161.83 L260.55 160.13 Z" fill="#5f6870"/><path d="M294.60 158.43 L295.60 160.13 L294.60 161.83 L293.60 160.13 Z" fill="#5f6870"/><path d="M327.65 158.43 L328.65 160.13 L327.65 161.83 L326.65 160.13 Z" fill="#5f6870"/><path d="M360.70 158.43 L361.70 160.13 L360.70 161.83 L359.70 160.13 Z" fill="#5f6870"/><path d="M393.75 158.43 L394.75 160.13 L393.75 161.83 L392.75 160.13 Z" fill="#5f6870"/><path d="M426.80 158.43 L427.80 160.13 L426.80 161.83 L425.80 160.13 Z" fill="#5f6870"/><path d="M459.85 158.43 L460.85 160.13 L459.85 161.83 L458.85 160.13 Z" fill="#5f6870"/><path d="M492.90 158.43 L493.90 160.13 L492.90 161.83 L491.90 160.13 Z" fill="#5f6870"/><path d="M525.95 158.43 L526.95 160.13 L525.95 161.83 L524.95 160.13 Z" fill="#5f6870"/><path d="M559.00 158.43 L560.00 160.13 L559.00 161.83 L558.00 160.13 Z" fill="#5f6870"/><path d="M228.50 191.46 L229.50 193.16 L228.50 194.86 L227.50 193.16 Z" fill="#5f6870"/><path d="M261.55 191.46 L262.55 193.16 L261.55 194.86 L260.55 193.16 Z" fill="#5f6870"/><path d="M294.60 191.46 L295.60 193.16 L294.60 194.86 L293.60 193.16 Z" fill="#5f6870"/><path d="M327.65 191.46 L328.65 193.16 L327.65 194.86 L326.65 193.16 Z" fill="#5f6870"/><path d="M360.70 191.46 L361.70 193.16 L360.70 194.86 L359.70 193.16 Z" fill="#5f6870"/><path d="M393.75 191.46 L394.75 193.16 L393.75 194.86 L392.75 193.16 Z" fill="#5f6870"/><path d="M426.80 191.46 L427.80 193.16 L426.80 194.86 L425.80 193.16 Z" fill="#5f6870"/><path d="M459.85 191.46 L460.85 193.16 L459.85 194.86 L458.85 193.16 Z" fill="#5f6870"/><path d="M492.90 191.46 L493.90 193.16 L492.90 194.86 L491.90 193.16 Z" fill="#5f6870"/><path d="M525.95 191.46 L526.95 193.16 L525.95 194.86 L524.95 193.16 Z" fill="#5f6870"/><path d="M559.00 191.46 L560.00 193.16 L559.00 194.86 L558.00 193.16 Z" fill="#5f6870"/><path d="M228.50 224.49 L229.50 226.19 L228.50 227.89 L227.50 226.19 Z" fill="#5f6870"/><path d="M261.55 224.49 L262.55 226.19 L261.55 227.89 L260.55 226.19 Z" fill="#5f6870"/><path d="M294.60 224.49 L295.60 226.19 L294.60 227.89 L293.60 226.19 Z" fill="#5f6870"/><path d="M327.65 224.49 L328.65 226.19 L327.65 227.89 L326.65 226.19 Z" fill="#5f6870"/><path d="M360.70 224.49 L361.70 226.19 L360.70 227.89 L359.70 226.19 Z" fill="#5f6870"/><path d="M393.75 224.49 L394.75 226.19 L393.75 227.89 L392.75 226.19 Z" fill="#5f6870"/><path d="M426.80 224.49 L427.80 226.19 L426.80 227.89 L425.80 226.19 Z" fill="#5f6870"/><path d="M459.85 224.49 L460.85 226.19 L459.85 227.89 L458.85 226.19 Z" fill="#5f6870"/><path d="M492.90 224.49 L493.90 226.19 L492.90 227.89 L491.90 226.19 Z" fill="#5f6870"/><path d="M525.95 224.49 L526.95 226.19 L525.95 227.89 L524.95 226.19 Z" fill="#5f6870"/><path d="M559.00 224.49 L560.00 226.19 L559.00 227.89 L558.00 226.19 Z" fill="#5f6870"/><path d="M228.50 257.52 L229.50 259.22 L228.50 260.92 L227.50 259.22 Z" fill="#5f6870"/><path d="M261.55 257.52 L262.55 259.22 L261.55 260.92 L260.55 259.22 Z" fill="#5f6870"/><path d="M294.60 257.52 L295.60 259.22 L294.60 260.92 L293.60 259.22 Z" fill="#5f6870"/><path d="M327.65 257.52 L328.65 259.22 L327.65 260.92 L326.65 259.22 Z" fill="#5f6870"/><path d="M360.70 257.52 L361.70 259.22 L360.70 260.92 L359.70 259.22 Z" fill="#5f6870"/><path d="M393.75 257.52 L394.75 259.22 L393.75 260.92 L392.75 259.22 Z" fill="#5f6870"/><path d="M426.80 257.52 L427.80 259.22 L426.80 260.92 L425.80 259.22 Z" fill="#5f6870"/><path d="M459.85 257.52 L460.85 259.22 L459.85 260.92 L458.85 259.22 Z" fill="#5f6870"/><path d="M492.90 257.52 L493.90 259.22 L492.90 260.92 L491.90 259.22 Z" fill="#5f6870"/><path d="M525.95 257.52 L526.95 259.22 L525.95 260.92 L524.95 259.22 Z" fill="#5f6870"/><path d="M559.00 257.52 L560.00 259.22 L559.00 260.92 L558.00 259.22 Z" fill="#5f6870"/><path d="M228.50 290.55 L229.50 292.25 L228.50 293.95 L227.50 292.25 Z" fill="#5f6870"/><path d="M261.55 290.55 L262.55 292.25 L261.55 293.95 L260.55 292.25 Z" fill="#5f6870"/><path d="M294.60 290.55 L295.60 292.25 L294.60 293.95 L293.60 292.25 Z" fill="#5f6870"/><path d="M327.65 290.55 L328.65 292.25 L327.65 293.95 L326.65 292.25 Z" fill="#5f6870"/><path d="M360.70 290.55 L361.70 292.25 L360.70 293.95 L359.70 292.25 Z" fill="#5f6870"/><path d="M393.75 290.55 L394.75 292.25 L393.75 293.95 L392.75 292.25 Z" fill="#5f6870"/><path d="M426.80 290.55 L427.80 292.25 L426.80 293.95 L425.80 292.25 Z" fill="#5f6870"/><path d="M459.85 290.55 L460.85 292.25 L459.85 293.95 L458.85 292.25 Z" fill="#5f6870"/><path d="M492.90 290.55 L493.90 292.25 L492.90 293.95 L491.90 292.25 Z" fill="#5f6870"/><path d="M525.95 290.55 L526.95 292.25 L525.95 293.95 L524.95 292.25 Z" fill="#5f6870"/><path d="M559.00 290.55 L560.00 292.25 L559.00 293.95 L558.00 292.25 Z" fill="#5f6870"/><path d="M228.50 323.58 L229.50 325.28 L228.50 326.98 L227.50 325.28 Z" fill="#5f6870"/><path d="M261.55 323.58 L262.55 325.28 L261.55 326.98 L260.55 325.28 Z" fill="#5f6870"/><path d="M294.60 323.58 L295.60 325.28 L294.60 326.98 L293.60 325.28 Z" fill="#5f6870"/><path d="M327.65 323.58 L328.65 325.28 L327.65 326.98 L326.65 325.28 Z" fill="#5f6870"/><path d="M360.70 323.58 L361.70 325.28 L360.70 326.98 L359.70 325.28 Z" fill="#5f6870"/><path d="M393.75 323.58 L394.75 325.28 L393.75 326.98 L392.75 325.28 Z" fill="#5f6870"/><path d="M426.80 323.58 L427.80 325.28 L426.80 326.98 L425.80 325.28 Z" fill="#5f6870"/><path d="M459.85 323.58 L460.85 325.28 L459.85 326.98 L458.85 325.28 Z" fill="#5f6870"/><path d="M492.90 323.58 L493.90 325.28 L492.90 326.98 L491.90 325.28 Z" fill="#5f6870"/><path d="M525.95 323.58 L526.95 325.28 L525.95 326.98 L524.95 325.28 Z" fill="#5f6870"/><path d="M559.00 323.58 L560.00 325.28 L559.00 326.98 L558.00 325.28 Z" fill="#5f6870"/><path d="M228.50 356.61 L229.50 358.31 L228.50 360.01 L227.50 358.31 Z" fill="#5f6870"/><path d="M261.55 356.61 L262.55 358.31 L261.55 360.01 L260.55 358.31 Z" fill="#5f6870"/><path d="M294.60 356.61 L295.60 358.31 L294.60 360.01 L293.60 358.31 Z" fill="#5f6870"/><path d="M327.65 356.61 L328.65 358.31 L327.65 360.01 L326.65 358.31 Z" fill="#5f6870"/><path d="M360.70 356.61 L361.70 358.31 L360.70 360.01 L359.70 358.31 Z" fill="#5f6870"/><path d="M393.75 356.61 L394.75 358.31 L393.75 360.01 L392.75 358.31 Z" fill="#5f6870"/><path d="M426.80 356.61 L427.80 358.31 L426.80 360.01 L425.80 358.31 Z" fill="#5f6870"/><path d="M459.85 356.61 L460.85 358.31 L459.85 360.01 L458.85 358.31 Z" fill="#5f6870"/><path d="M492.90 356.61 L493.90 358.31 L492.90 360.01 L491.90 358.31 Z" fill="#5f6870"/><path d="M525.95 356.61 L526.95 358.31 L525.95 360.01 L524.95 358.31 Z" fill="#5f6870"/><path d="M559.00 356.61 L560.00 358.31 L559.00 360.01 L558.00 358.31 Z" fill="#5f6870"/><path d="M228.50 389.64 L229.50 391.34 L228.50 393.04 L227.50 391.34 Z" fill="#5f6870"/><path d="M261.55 389.64 L262.55 391.34 L261.55 393.04 L260.55 391.34 Z" fill="#5f6870"/><path d="M294.60 389.64 L295.60 391.34 L294.60 393.04 L293.60 391.34 Z" fill="#5f6870"/><path d="M327.65 389.64 L328.65 391.34 L327.65 393.04 L326.65 391.34 Z" fill="#5f6870"/><path d="M360.70 389.64 L361.70 391.34 L360.70 393.04 L359.70 391.34 Z" fill="#5f6870"/><path d="M393.75 389.64 L394.75 391.34 L393.75 393.04 L392.75 391.34 Z" fill="#5f6870"/><path d="M426.80 389.64 L427.80 391.34 L426.80 393.04 L425.80 391.34 Z" fill="#5f6870"/><path d="M459.85 389.64 L460.85 391.34 L459.85 393.04 L458.85 391.34 Z" fill="#5f6870"/><path d="M492.90 389.64 L493.90 391.34 L492.90 393.04 L491.90 391.34 Z" fill="#5f6870"/><path d="M525.95 389.64 L526.95 391.34 L525.95 393.04 L524.95 391.34 Z" fill="#5f6870"/><path d="M559.00 389.64 L560.00 391.34 L559.00 393.04 L558.00 391.34 Z" fill="#5f6870"/><path d="M228.50 422.67 L229.50 424.37 L228.50 426.07 L227.50 424.37 Z" fill="#5f6870"/><path d="M261.55 422.67 L262.55 424.37 L261.55 426.07 L260.55 424.37 Z" fill="#5f6870"/><path d="M294.60 422.67 L295.60 424.37 L294.60 426.07 L293.60 424.37 Z" fill="#5f6870"/><path d="M327.65 422.67 L328.65 424.37 L327.65 426.07 L326.65 424.37 Z" fill="#5f6870"/><path d="M360.70 422.67 L361.70 424.37 L360.70 426.07 L359.70 424.37 Z" fill="#5f6870"/><path d="M393.75 422.67 L394.75 424.37 L393.75 426.07 L392.75 424.37 Z" fill="#5f6870"/><path d="M426.80 422.67 L427.80 424.37 L426.80 426.07 L425.80 424.37 Z" fill="#5f6870"/><path d="M459.85 422.67 L460.85 424.37 L459.85 426.07 L458.85 424.37 Z" fill="#5f6870"/><path d="M492.90 422.67 L493.90 424.37 L492.90 426.07 L491.90 424.37 Z" fill="#5f6870"/><path d="M525.95 422.67 L526.95 424.37 L525.95 426.07 L524.95 424.37 Z" fill="#5f6870"/><path d="M559.00 422.67 L560.00 424.37 L559.00 426.07 L558.00 424.37 Z" fill="#5f6870"/><path d="M228.50 455.70 L229.50 457.40 L228.50 459.10 L227.50 457.40 Z" fill="#5f6870"/><path d="M261.55 455.70 L262.55 457.40 L261.55 459.10 L260.55 457.40 Z" fill="#5f6870"/><path d="M294.60 455.70 L295.60 457.40 L294.60 459.10 L293.60 457.40 Z" fill="#5f6870"/><path d="M327.65 455.70 L328.65 457.40 L327.65 459.10 L326.65 457.40 Z" fill="#5f6870"/><path d="M360.70 455.70 L361.70 457.40 L360.70 459.10 L359.70 457.40 Z" fill="#5f6870"/><path d="M393.75 455.70 L394.75 457.40 L393.75 459.10 L392.75 457.40 Z" fill="#5f6870"/><path d="M426.80 455.70 L427.80 457.40 L426.80 459.10 L425.80 457.40 Z" fill="#5f6870"/><path d="M459.85 455.70 L460.85 457.40 L459.85 459.10 L458.85 457.40 Z" fill="#5f6870"/><path d="M492.90 455.70 L493.90 457.40 L492.90 459.10 L491.90 457.40 Z" fill="#5f6870"/><path d="M525.95 455.70 L526.95 457.40 L525.95 459.10 L524.95 457.40 Z" fill="#5f6870"/><path d="M559.00 455.70 L560.00 457.40 L559.00 459.10 L558.00 457.40 Z" fill="#5f6870"/><path d="M228.50 488.73 L229.50 490.43 L228.50 492.13 L227.50 490.43 Z" fill="#5f6870"/><path d="M261.55 488.73 L262.55 490.43 L261.55 492.13 L260.55 490.43 Z" fill="#5f6870"/><path d="M294.60 488.73 L295.60 490.43 L294.60 492.13 L293.60 490.43 Z" fill="#5f6870"/><path d="M327.65 488.73 L328.65 490.43 L327.65 492.13 L326.65 490.43 Z" fill="#5f6870"/><path d="M360.70 488.73 L361.70 490.43 L360.70 492.13 L359.70 490.43 Z" fill="#5f6870"/><path d="M393.75 488.73 L394.75 490.43 L393.75 492.13 L392.75 490.43 Z" fill="#5f6870"/><path d="M426.80 488.73 L427.80 490.43 L426.80 492.13 L425.80 490.43 Z" fill="#5f6870"/><path d="M459.85 488.73 L460.85 490.43 L459.85 492.13 L458.85 490.43 Z" fill="#5f6870"/><path d="M492.90 488.73 L493.90 490.43 L492.90 492.13 L491.90 490.43 Z" fill="#5f6870"/><path d="M525.95 488.73 L526.95 490.43 L525.95 492.13 L524.95 490.43 Z" fill="#5f6870"/><path d="M559.00 488.73 L560.00 490.43 L559.00 492.13 L558.00 490.43 Z" fill="#5f6870"/></svg>
<svg class="a" style="left:385.5px;top:129.5px" width="11" height="14" viewBox="0 0 11 14"><path d="M0 0.7 H11 M0 13.3 H11" stroke="#333" stroke-width="1.1"/><path d="M5.5 3 V11" stroke="#333" stroke-width="1.1"/><path d="M3.3 4.8 L5.5 2.6 L7.7 4.8 M3.3 9.2 L5.5 11.4 L7.7 9.2" fill="none" stroke="#333" stroke-width="1.1"/></svg>
<div class="a" style="left:403.6px;top:129.8px;width:58.6px;height:13.1px;background:#fff"></div>
<svg class="a" style="left:413.00px;top:126.70px" width="40.00" height="18.20" viewBox="0 0 40.00 18.20"><text x="0" y="12.36" font-family="Liberation Sans" font-size="9.1" font-weight="normal" fill="#404040" textLength="40.00" lengthAdjust="spacingAndGlyphs" stroke="#404040" stroke-width="0.35">10 &#181;V/cm</text></svg>
<svg class="a" style="left:475.5px;top:131px" width="14" height="11" viewBox="0 0 14 11"><path d="M0.6 0 V11 M13.4 0 V11" stroke="#333" stroke-width="1.1"/><path d="M3 5.5 H11 M5 3.5 L3 5.5 L5 7.5 M9 3.5 L11 5.5 L9 7.5" fill="none" stroke="#333" stroke-width="1"/></svg>
<div class="a" style="left:496px;top:129.8px;width:57.6px;height:13.1px;background:#fff"></div>
<svg class="a" style="left:507.70px;top:126.70px" width="35.10" height="18.20" viewBox="0 0 35.10 18.20"><text x="0" y="12.36" font-family="Liberation Sans" font-size="9.1" font-weight="normal" fill="#404040" textLength="35.10" lengthAdjust="spacingAndGlyphs" stroke="#404040" stroke-width="0.35">1 ms/cm</text></svg>
<svg class="a" style="left:203px;top:92px" width="362" height="425" viewBox="203 92 362 425"><path d="M227.70 327.90 C231.39 328.17 234.21 328.23 240.00 328.80 C245.79 329.37 244.15 330.34 247.00 329.80 C249.85 329.26 247.76 329.64 249.50 327.00 C251.24 324.36 250.07 324.00 252.80 321.00 C255.53 318.00 255.84 319.10 258.60 317.00 C261.36 314.90 260.26 315.71 262.00 314.00 C263.74 312.29 262.60 311.60 264.40 311.30 C266.20 311.00 265.72 313.69 268.00 313.00 C270.28 312.31 269.90 309.30 272.00 309.00 C274.10 308.70 273.20 310.20 275.00 312.00 C276.80 313.80 276.20 313.50 278.00 315.00 C279.80 316.50 279.29 318.20 281.00 317.00 C282.71 315.80 282.20 317.30 283.70 311.00 C285.20 304.70 284.41 309.80 286.00 296.00 C287.59 282.20 287.20 284.20 289.00 265.00 C290.80 245.80 290.35 245.80 292.00 232.00 C293.65 218.20 293.30 223.59 294.50 219.00 C295.70 214.41 294.95 216.70 296.00 216.70 C297.05 216.70 296.50 213.51 298.00 219.00 C299.50 224.49 299.20 222.10 301.00 235.00 C302.80 247.90 302.20 244.30 304.00 262.00 C305.80 279.70 305.20 276.00 307.00 294.00 C308.80 312.00 308.41 308.20 310.00 322.00 C311.59 335.80 310.95 331.45 312.30 340.00 C313.65 348.55 313.24 345.94 314.50 350.50 C315.76 355.06 315.30 354.15 316.50 355.20 C317.70 356.25 317.15 356.61 318.50 354.00 C319.85 351.39 319.35 351.90 321.00 346.50 C322.65 341.10 322.35 341.37 324.00 336.00 C325.65 330.63 324.70 332.80 326.50 328.60 C328.30 324.40 326.85 327.10 330.00 322.00 C333.15 316.90 334.90 314.72 337.00 311.60 M337.00 311.60 C337.70 312.00 341.63 314.51 343.00 315.00 C344.37 315.49 347.49 315.87 348.70 315.80 C349.91 315.73 352.16 314.40 353.40 314.40 C354.64 314.40 357.80 316.20 359.30 315.80 C360.81 315.40 364.94 311.00 366.30 311.00 C367.67 311.00 369.90 315.60 371.00 315.80 C372.10 316.00 374.60 312.86 375.70 312.70 C376.80 312.54 379.31 313.99 380.40 314.40 C381.48 314.81 384.04 316.25 385.00 316.20 C385.96 316.15 387.77 313.79 388.60 314.00 C389.43 314.21 391.28 317.95 392.10 318.00 C392.92 318.05 394.64 314.75 395.60 314.40 C396.56 314.05 399.20 314.18 400.30 315.00 C401.40 315.82 403.63 319.77 405.00 321.40 C406.37 323.03 410.58 329.00 412.00 329.00 C413.42 329.00 416.10 321.94 417.20 321.40 C418.30 320.86 420.37 324.87 421.40 324.40 C422.43 323.93 424.65 317.68 426.00 317.40 C427.35 317.12 431.76 322.19 433.00 322.00 C434.24 321.81 435.77 315.98 436.60 315.80 C437.43 315.62 439.14 319.85 440.10 320.50 C441.06 321.15 443.42 321.29 444.80 321.40 C446.18 321.50 450.39 322.01 451.90 321.40 C453.40 320.79 456.62 316.20 457.70 316.20 C458.78 316.20 460.23 320.57 461.20 321.40 C462.17 322.23 464.90 323.30 466.00 323.30 C467.10 323.30 469.38 321.81 470.60 321.40 C471.83 320.99 475.13 320.27 476.50 319.80 C477.87 319.33 481.07 317.21 482.30 317.40 C483.53 317.59 485.90 321.54 487.00 321.40 C488.10 321.26 490.60 316.25 491.70 316.20 C492.80 316.15 495.31 320.72 496.40 321.00 C497.48 321.28 499.90 318.55 501.00 318.60 C502.10 318.65 504.83 320.81 505.80 321.40 C506.77 321.99 507.94 323.48 509.30 323.70 C510.67 323.92 515.73 323.50 517.50 323.30 C519.27 323.10 523.27 322.88 524.50 322.00 C525.73 321.12 527.18 315.65 528.00 315.80 C528.82 315.95 530.54 323.11 531.50 323.30 C532.46 323.49 535.24 317.62 536.20 317.40 C537.16 317.18 538.74 321.95 539.70 321.40 C540.66 320.85 543.31 313.17 544.40 312.70 C545.49 312.23 548.04 317.13 549.00 317.40 C549.96 317.67 551.76 314.04 552.60 315.00 C553.44 315.96 555.51 324.36 556.20 325.60 C556.89 326.84 557.82 326.97 558.50 325.60 C559.18 324.24 561.59 315.26 562.00 313.90" fill="none" stroke="#6d9ab6" stroke-width="1.2" stroke-linejoin="round"/><path d="M279 305.5 V330.6 M296 202.4 V228 M316.5 344 V369" stroke="#3f6f8f" stroke-width="1"/><text x="279" y="341" font-family="Liberation Sans" font-weight="bold" font-size="7.5" fill="#2f648a" text-anchor="middle">1</text><text x="279.6" y="354" font-family="Liberation Sans" font-weight="bold" font-size="7.5" fill="#2f648a" text-anchor="middle">1.6ms</text><text x="296" y="198.2" font-family="Liberation Sans" font-weight="bold" font-size="7.5" fill="#2f648a" text-anchor="middle">2</text><text x="316.5" y="379" font-family="Liberation Sans" font-weight="bold" font-size="7.5" fill="#2f648a" text-anchor="middle">3</text><path d="M205.7 313.6 H223 L227.8 318.8 L223 324 H205.7 Z" fill="#0b5b85"/><text x="214" y="321.6" font-family="Liberation Sans" font-weight="bold" font-size="7.5" fill="#fff" text-anchor="middle">1</text><path d="M212.2 312.3 L214 310.5 L215.8 312.3 M212.2 325.3 L214 327.1 L215.8 325.3" fill="none" stroke="#7d9aad" stroke-width="0.8"/></svg>
<div class="a" style="left:427.6px;top:285.4px;width:113.6px;height:44.1px;background:rgba(170,196,212,0.55)"></div>
<svg class="a" style="left:431.60px;top:285.30px" width="106.30" height="16.60" viewBox="0 0 106.30 16.60"><text x="0" y="11.27" font-family="Liberation Sans" font-size="8.3" font-weight="normal" fill="#3473a0" textLength="106.30" lengthAdjust="spacingAndGlyphs" stroke="#3473a0" stroke-width="0.4">нижня третина передпліччя</text></svg>
<svg class="a" style="left:431.60px;top:294.90px" width="46.00" height="16.60" viewBox="0 0 46.00 16.60"><text x="0" y="11.27" font-family="Liberation Sans" font-size="8.3" font-weight="normal" fill="#3473a0" textLength="46.00" lengthAdjust="spacingAndGlyphs" stroke="#3473a0" stroke-width="0.4">24mA, 0.1ms</text></svg>
<svg class="a" style="left:431.60px;top:304.50px" width="40.40" height="16.60" viewBox="0 0 40.40 16.60"><text x="0" y="11.27" font-family="Liberation Sans" font-size="8.3" font-weight="normal" fill="#3473a0" textLength="40.40" lengthAdjust="spacingAndGlyphs" stroke="#3473a0" stroke-width="0.4">Antidromic</text></svg>
<svg class="a" style="left:431.60px;top:313.80px" width="19.50" height="16.60" viewBox="0 0 19.50 16.60"><text x="0" y="11.27" font-family="Liberation Sans" font-size="8.3" font-weight="normal" fill="#3473a0" textLength="19.50" lengthAdjust="spacingAndGlyphs" stroke="#3473a0" stroke-width="0.4">AV(2)</text></svg>
<div class="a" style="left:203.5px;top:511px;width:73px;height:5px;background:#d9dde1"></div>
<div class="a" style="left:276.5px;top:514.5px;width:286px;height:1.5px;background:#e3e6ea"></div>
<svg class="a" style="left:484px;top:459px" width="10" height="14" viewBox="0 0 10 14"><path d="M0.6 0.6 V11.5 L3 9.3 L5 13.3 L6.6 12.6 L4.8 8.8 H8.2 Z" fill="#fff" stroke="#555" stroke-width="0.9" stroke-linejoin="round"/></svg>
<div class="a" style="left:167px;top:517px;width:857px;height:27px;background:#fff"></div>
<svg class="a" style="left:202.60px;top:518.80px" width="16.20" height="25.20" viewBox="0 0 16.20 25.20"><text x="0" y="17.11" font-family="Liberation Sans" font-size="12.6" font-weight="bold" fill="#3b444b" textLength="16.20" lengthAdjust="spacingAndGlyphs">HF</text></svg>
<svg class="a" style="left:292.00px;top:518.80px" width="13.30" height="25.20" viewBox="0 0 13.30 25.20"><text x="0" y="17.11" font-family="Liberation Sans" font-size="12.6" font-weight="bold" fill="#3b444b" textLength="13.30" lengthAdjust="spacingAndGlyphs">LF</text></svg>
<svg class="a" style="left:377.60px;top:518.80px" width="15.60" height="25.20" viewBox="0 0 15.60 25.20"><text x="0" y="17.11" font-family="Liberation Sans" font-size="12.6" font-weight="bold" fill="#3b444b" textLength="15.60" lengthAdjust="spacingAndGlyphs">RF</text></svg>
<svg class="a" style="left:221.5px;top:525px" width="12" height="12" viewBox="0 0 12 12"><path d="M0.6 0 V11.4 H11 M2 10 Q4 5 11 5" fill="none" stroke="#555" stroke-width="1"/></svg>
<svg class="a" style="left:306.5px;top:525px" width="12" height="12" viewBox="0 0 12 12"><path d="M0.6 0 V11.4 H11 M1.5 5 H5 Q8 5 10 10" fill="none" stroke="#555" stroke-width="1"/></svg>
<svg class="a" style="left:394.5px;top:525px" width="12" height="12" viewBox="0 0 12 12"><path d="M0.6 0 V11.4 H11 M1.5 7 H4 Q6 10 8 7 H11" fill="none" stroke="#555" stroke-width="1"/></svg>
<div class="a" style="left:237.8px;top:524.3px;width:38.6px;height:14.8px;border:1px solid #ebebeb;border-radius:1px;background:#fff"></div><svg class="a" style="left:245.40px;top:523.50px" width="23.40" height="16.40" viewBox="0 0 23.40 16.40"><text x="0" y="11.14" font-family="Liberation Sans" font-size="8.2" font-weight="normal" fill="#444" textLength="23.40" lengthAdjust="spacingAndGlyphs" stroke="#444" stroke-width="0.3">50 Hz</text></svg>
<div class="a" style="left:323.3px;top:524.3px;width:38.7px;height:14.8px;border:1px solid #ebebeb;border-radius:1px;background:#fff"></div><svg class="a" style="left:331.80px;top:523.50px" width="22.40" height="16.40" viewBox="0 0 22.40 16.40"><text x="0" y="11.14" font-family="Liberation Sans" font-size="8.2" font-weight="normal" fill="#444" textLength="22.40" lengthAdjust="spacingAndGlyphs" stroke="#444" stroke-width="0.3">5 kHz</text></svg>
<div class="a" style="left:410.4px;top:524.3px;width:39.4px;height:14.8px;border:1px solid #ebebeb;border-radius:1px;background:#fff"></div><svg class="a" style="left:418.20px;top:523.50px" width="23.40" height="16.40" viewBox="0 0 23.40 16.40"><text x="0" y="11.14" font-family="Liberation Sans" font-size="8.2" font-weight="normal" fill="#444" textLength="23.40" lengthAdjust="spacingAndGlyphs" stroke="#444" stroke-width="0.3">50 Hz</text></svg>
<div class="a" style="left:929.1px;top:527.60px;font-size:7px;line-height:8.40px;color:#666;font-weight:normal;">RMS:</div>
<div class="a" style="left:950px;top:526.10px;font-size:9.5px;line-height:11.40px;color:#3a6a8a;font-weight:normal;">1ch</div>
<div class="a" style="left:970.8px;top:525.2px;width:23.1px;height:13.7px;background:#e3101c;color:#fff;font-size:9px;line-height:13.5px;text-align:center">- &#181;V</div>
<div class="a" style="left:1005.3px;top:519px;width:1px;height:25px;background:#d8dcdf"></div>
<svg class="a" style="left:1000px;top:520px" width="24" height="24" viewBox="1000 520 24 24"><path d="M1015.4 527.5 V537" stroke="#cf1f3a" stroke-width="1.5"/><path d="M1013.6 528.8 L1015.4 525.8 L1017.2 528.8 Z" fill="#cf1f3a"/><path d="M1015.4 535 Q1011.8 533.5 1011.8 531" fill="none" stroke="#cf1f3a" stroke-width="1.4"/><circle cx="1011.8" cy="530.6" r="1.4" fill="#cf1f3a"/><path d="M1015.4 533.5 Q1019.3 532.5 1019.3 529.5" fill="none" stroke="#cf1f3a" stroke-width="1.4"/><rect x="1018" y="527.6" width="2.6" height="2.6" fill="#cf1f3a"/><circle cx="1015.4" cy="537.4" r="1.5" fill="#cf1f3a"/></svg>
<div class="a" style="left:567px;top:90.4px;width:453px;height:112.6px;background:#fff;border:1px solid #e1e5ea"></div>
<div class="a" style="left:568px;top:91.4px;width:451px;height:12.2px;background:#edf0f4"></div>
<svg class="a" style="left:569.70px;top:89.40px" width="65.00" height="16.80" viewBox="0 0 65.00 16.80"><text x="0" y="11.41" font-family="Liberation Sans" font-size="8.4" font-weight="normal" fill="#555" textLength="65.00" lengthAdjust="spacingAndGlyphs">Sensory responses</text></svg>
<svg class="a" style="left:986.3px;top:97.5px" width="5" height="3" viewBox="0 0 5 3"><path d="M0 0 H5 L2.5 3 Z" fill="#111"/></svg><svg class="a" style="left:999.0999999999999px;top:95.8px" width="4.6" height="7" viewBox="0 0 4.6 7"><rect x="0.8" y="0.5" width="3" height="4.2" fill="none" stroke="#333" stroke-width="1.1"/><path d="M0 4.8 H4.6" stroke="#333" stroke-width="0.9"/><path d="M2.3 4.8 V7" stroke="#555" stroke-width="0.9"/><path d="M1.6 1 V4.5" stroke="#333" stroke-width="0.9"/></svg><svg class="a" style="left:1010.6999999999999px;top:96.1px" width="5.8" height="5.8" viewBox="0 0 5.8 5.8"><path d="M0.4 0.4 L5.4 5.4 M5.4 0.4 L0.4 5.4" stroke="#222" stroke-width="1.15"/></svg>
<div class="a" style="left:568px;top:103.6px;width:451px;height:30.7px;background:#f4f6f9"></div>
<div class="a" style="left:583.8px;top:106px;width:1px;height:27px;background:#e3e6ea"></div>
<div class="a" style="left:642.5px;top:106px;width:1px;height:27px;background:#e3e6ea"></div>
<div class="a" style="left:676.4px;top:106px;width:1px;height:27px;background:#e3e6ea"></div>
<div class="a" style="left:706.3px;top:106px;width:1px;height:27px;background:#e3e6ea"></div>
<div class="a" style="left:736.3px;top:106px;width:1px;height:27px;background:#e3e6ea"></div>
<div class="a" style="left:766.1px;top:106px;width:1px;height:27px;background:#e3e6ea"></div>
<div class="a" style="left:795.4px;top:106px;width:1px;height:27px;background:#e3e6ea"></div>
<div class="a" style="left:829.1px;top:106px;width:1px;height:27px;background:#e3e6ea"></div>
<div class="a" style="left:862.5px;top:106px;width:1px;height:27px;background:#e3e6ea"></div>
<div class="a" style="left:896.2px;top:106px;width:1px;height:27px;background:#e3e6ea"></div>
<div class="a" style="left:930.0px;top:106px;width:1px;height:27px;background:#e3e6ea"></div>
<div class="a" style="left:960.1px;top:106px;width:1px;height:27px;background:#e3e6ea"></div>
<div class="a" style="left:567.5px;width:16.8px;top:114.7px;font-size:8.2px;letter-spacing:-0.2px;line-height:10px;color:#606060;text-align:center;overflow:visible">N</div>
<div class="a" style="left:584.3px;width:58.7px;top:109.9px;font-size:8.2px;letter-spacing:-0.2px;line-height:10px;color:#606060;text-align:center;overflow:visible">Registration</div>
<div class="a" style="left:584.3px;width:58.7px;top:119.5px;font-size:8.2px;letter-spacing:-0.2px;line-height:10px;color:#606060;text-align:center;overflow:visible">point</div>
<div class="a" style="left:643.0px;width:33.9px;top:109.9px;font-size:8.2px;letter-spacing:-0.2px;line-height:10px;color:#606060;text-align:center;overflow:visible">Distance,</div>
<div class="a" style="left:643.0px;width:33.9px;top:119.5px;font-size:8.2px;letter-spacing:-0.2px;line-height:10px;color:#606060;text-align:center;overflow:visible">mm</div>
<div class="a" style="left:676.9px;width:29.9px;top:114.7px;font-size:8.2px;letter-spacing:-0.2px;line-height:10px;color:#606060;text-align:center;overflow:visible">Lat., ms</div>
<div class="a" style="left:706.8px;width:30.0px;top:105.1px;font-size:8.2px;letter-spacing:-0.2px;line-height:10px;color:#606060;text-align:center;overflow:visible">Lat.</div>
<div class="a" style="left:706.8px;width:30.0px;top:114.7px;font-size:8.2px;letter-spacing:-0.2px;line-height:10px;color:#606060;text-align:center;overflow:visible">peak,</div>
<div class="a" style="left:706.8px;width:30.0px;top:124.3px;font-size:8.2px;letter-spacing:-0.2px;line-height:10px;color:#606060;text-align:center;overflow:visible">ms</div>
<div class="a" style="left:736.8px;width:29.8px;top:109.9px;font-size:8.2px;letter-spacing:-0.2px;line-height:10px;color:#606060;text-align:center;overflow:visible">Ampl.,</div>
<div class="a" style="left:736.8px;width:29.8px;top:119.5px;font-size:8.2px;letter-spacing:-0.2px;line-height:10px;color:#606060;text-align:center;overflow:visible">&#181;V</div>
<div class="a" style="left:766.6px;width:29.3px;top:109.9px;font-size:8.2px;letter-spacing:-0.2px;line-height:10px;color:#606060;text-align:center;overflow:visible">Duration</div>
<div class="a" style="left:766.6px;width:29.3px;top:119.5px;font-size:8.2px;letter-spacing:-0.2px;line-height:10px;color:#606060;text-align:center;overflow:visible">ms</div>
<div class="a" style="left:795.9px;width:33.7px;top:109.9px;font-size:8.2px;letter-spacing:-0.2px;line-height:10px;color:#606060;text-align:center;overflow:visible">Time dif.,</div>
<div class="a" style="left:795.9px;width:33.7px;top:119.5px;font-size:8.2px;letter-spacing:-0.2px;line-height:10px;color:#606060;text-align:center;overflow:visible">ms</div>
<div class="a" style="left:829.6px;width:33.4px;top:109.9px;font-size:8.2px;letter-spacing:-0.2px;line-height:10px;color:#606060;text-align:center;overflow:visible">Speed,</div>
<div class="a" style="left:829.6px;width:33.4px;top:119.5px;font-size:8.2px;letter-spacing:-0.2px;line-height:10px;color:#606060;text-align:center;overflow:visible">m/s</div>
<div class="a" style="left:863.0px;width:33.7px;top:109.9px;font-size:8.2px;letter-spacing:-0.2px;line-height:10px;color:#606060;text-align:center;overflow:visible">Stim.,</div>
<div class="a" style="left:863.0px;width:33.7px;top:119.5px;font-size:8.2px;letter-spacing:-0.2px;line-height:10px;color:#606060;text-align:center;overflow:visible">mA</div>
<div class="a" style="left:896.7px;width:33.8px;top:114.7px;font-size:8.2px;letter-spacing:-0.2px;line-height:10px;color:#606060;text-align:center;overflow:visible">Stim., ms</div>
<div class="a" style="left:930.5px;width:30.1px;top:114.7px;font-size:8.2px;letter-spacing:-0.2px;line-height:10px;color:#606060;text-align:center;overflow:visible">t, &#176;C</div>
<div class="a" style="left:960.6px;width:58.9px;top:114.7px;font-size:8.2px;letter-spacing:-0.2px;line-height:10px;color:#606060;text-align:center;overflow:visible">Comment</div>
<svg class="a" style="left:573.20px;top:132.00px" width="119.00" height="16.80" viewBox="0 0 119.00 16.80"><text x="0" y="11.41" font-family="Liberation Sans" font-size="8.4" font-weight="normal" fill="#3a3a3a" textLength="119.00" lengthAdjust="spacingAndGlyphs" stroke="#3a3a3a" stroke-width="0.38">S, n. Radialis, (C5-C8), antidromic</text></svg>
<div class="a" style="left:569.7px;top:146.1px;width:449.3px;height:18.9px;background:#0b5b85"></div>
<div class="a" style="left:583.8px;top:146.1px;width:1px;height:18.9px;background:#cfe0ea"></div>
<div class="a" style="left:642.5px;top:146.1px;width:1px;height:18.9px;background:#cfe0ea"></div>
<div class="a" style="left:676.4px;top:146.1px;width:1px;height:18.9px;background:#cfe0ea"></div>
<div class="a" style="left:706.3px;top:146.1px;width:1px;height:18.9px;background:#cfe0ea"></div>
<div class="a" style="left:736.3px;top:146.1px;width:1px;height:18.9px;background:#cfe0ea"></div>
<div class="a" style="left:766.1px;top:146.1px;width:1px;height:18.9px;background:#cfe0ea"></div>
<div class="a" style="left:795.4px;top:146.1px;width:1px;height:18.9px;background:#cfe0ea"></div>
<div class="a" style="left:829.1px;top:146.1px;width:1px;height:18.9px;background:#cfe0ea"></div>
<div class="a" style="left:862.5px;top:146.1px;width:1px;height:18.9px;background:#cfe0ea"></div>
<div class="a" style="left:896.2px;top:146.1px;width:1px;height:18.9px;background:#cfe0ea"></div>
<div class="a" style="left:930.0px;top:146.1px;width:1px;height:18.9px;background:#cfe0ea"></div>
<div class="a" style="left:960.1px;top:146.1px;width:1px;height:18.9px;background:#cfe0ea"></div>
<div class="a" style="left:569.0px;top:146.6px;font-size:8.3px;letter-spacing:-0.2px;line-height:9.7px;color:#eef4f8">1</div>
<div class="a" style="left:585.8px;top:146.6px;font-size:8.3px;letter-spacing:-0.2px;line-height:9.7px;color:#eef4f8">нижня третина<br>передпліччя</div>
<div class="a" style="left:644.5px;top:146.6px;font-size:8.3px;letter-spacing:-0.2px;line-height:9.7px;color:#eef4f8">100</div>
<div class="a" style="left:678.4px;top:146.6px;font-size:8.3px;letter-spacing:-0.2px;line-height:9.7px;color:#eef4f8">1.6</div>
<div class="a" style="left:708.3px;top:146.6px;font-size:8.3px;letter-spacing:-0.2px;line-height:9.7px;color:#eef4f8">2.1</div>
<div class="a" style="left:738.3px;top:146.6px;font-size:8.3px;letter-spacing:-0.2px;line-height:9.7px;color:#eef4f8">31.11</div>
<div class="a" style="left:768.1px;top:146.6px;font-size:8.3px;letter-spacing:-0.2px;line-height:9.7px;color:#eef4f8">1.1</div>
<div class="a" style="left:797.4px;top:146.6px;font-size:8.3px;letter-spacing:-0.2px;line-height:9.7px;color:#eef4f8">1.56</div>
<div class="a" style="left:831.1px;top:146.6px;font-size:8.3px;letter-spacing:-0.2px;line-height:9.7px;color:#eef4f8">64.00</div>
<div class="a" style="left:864.5px;top:146.6px;font-size:8.3px;letter-spacing:-0.2px;line-height:9.7px;color:#eef4f8">17</div>
<div class="a" style="left:898.2px;top:146.6px;font-size:8.3px;letter-spacing:-0.2px;line-height:9.7px;color:#eef4f8">0.1</div>
<div class="a" style="left:567px;top:208.5px;width:453px;height:150.5px;background:#fff;border:1px solid #e1e5ea"></div>
<div class="a" style="left:568px;top:209.5px;width:451px;height:13.7px;background:#edf0f4"></div>
<svg class="a" style="left:569.80px;top:207.20px" width="18.50" height="16.80" viewBox="0 0 18.50 16.80"><text x="0" y="11.41" font-family="Liberation Sans" font-size="8.4" font-weight="normal" fill="#555" textLength="18.50" lengthAdjust="spacingAndGlyphs">NCVs</text></svg>
<svg class="a" style="left:986.9px;top:215.7px" width="5" height="3" viewBox="0 0 5 3"><path d="M0 0 H5 L2.5 3 Z" fill="#111"/></svg><svg class="a" style="left:999.6999999999999px;top:214.0px" width="4.6" height="7" viewBox="0 0 4.6 7"><rect x="0.8" y="0.5" width="3" height="4.2" fill="none" stroke="#333" stroke-width="1.1"/><path d="M0 4.8 H4.6" stroke="#333" stroke-width="0.9"/><path d="M2.3 4.8 V7" stroke="#555" stroke-width="0.9"/><path d="M1.6 1 V4.5" stroke="#333" stroke-width="0.9"/></svg><svg class="a" style="left:1011.3px;top:214.29999999999998px" width="5.8" height="5.8" viewBox="0 0 5.8 5.8"><path d="M0.4 0.4 L5.4 5.4 M5.4 0.4 L0.4 5.4" stroke="#222" stroke-width="1.15"/></svg>
<div class="a" style="left:568px;top:223.2px;width:451px;height:11px;background:#f4f6f9"></div>
<div class="a" style="left:616.5px;top:224px;width:1px;height:10px;background:#e3e6ea"></div>
<div class="a" style="left:743.0px;top:224px;width:1px;height:10px;background:#e3e6ea"></div>
<div class="a" style="left:814.5px;top:224px;width:1px;height:10px;background:#e3e6ea"></div>
<div class="a" style="left:885.3px;top:224px;width:1px;height:10px;background:#e3e6ea"></div>
<div class="a" style="left:956.7px;top:224px;width:1px;height:10px;background:#e3e6ea"></div>
<div class="a" style="left:568.0px;width:49.0px;top:223.7px;font-size:8.1px;letter-spacing:-0.15px;line-height:10px;color:#606060;text-align:center">N</div>
<div class="a" style="left:617.0px;width:126.5px;top:223.7px;font-size:8.1px;letter-spacing:-0.15px;line-height:10px;color:#606060;text-align:center">Segment</div>
<div class="a" style="left:743.5px;width:71.5px;top:223.7px;font-size:8.1px;letter-spacing:-0.15px;line-height:10px;color:#606060;text-align:center">Distance, mm</div>
<div class="a" style="left:815.0px;width:70.8px;top:223.7px;font-size:8.1px;letter-spacing:-0.15px;line-height:10px;color:#606060;text-align:center">Time dif., ms</div>
<div class="a" style="left:885.8px;width:71.4px;top:223.7px;font-size:8.1px;letter-spacing:-0.15px;line-height:10px;color:#606060;text-align:center">Speed, m/s</div>
<div class="a" style="left:957.2px;width:62.3px;top:223.7px;font-size:8.1px;letter-spacing:-0.15px;line-height:10px;color:#606060;text-align:center">t, &#176;C</div>
<svg class="a" style="left:572.70px;top:230.60px" width="120.10" height="16.80" viewBox="0 0 120.10 16.80"><text x="0" y="11.41" font-family="Liberation Sans" font-size="8.4" font-weight="normal" fill="#3a3a3a" textLength="120.10" lengthAdjust="spacingAndGlyphs" stroke="#3a3a3a" stroke-width="0.38">S, n. Radialis, (C5-C8), antidromic</text></svg>
<div class="a" style="left:568px;top:245.7px;width:451px;height:9.7px;background:#eceff3"></div>
<div class="a" style="left:616.5px;top:245.7px;width:1px;height:9.7px;background:#f8f9fb"></div>
<div class="a" style="left:743.0px;top:245.7px;width:1px;height:9.7px;background:#f8f9fb"></div>
<div class="a" style="left:814.5px;top:245.7px;width:1px;height:9.7px;background:#f8f9fb"></div>
<div class="a" style="left:885.3px;top:245.7px;width:1px;height:9.7px;background:#f8f9fb"></div>
<div class="a" style="left:956.7px;top:245.7px;width:1px;height:9.7px;background:#f8f9fb"></div>
<div class="a" style="left:570.7px;top:245.6px;font-size:8.2px;letter-spacing:-0.2px;line-height:10px;color:#505050">0 - 1</div>
<div class="a" style="left:619.7px;top:245.6px;font-size:8.2px;letter-spacing:-0.2px;line-height:10px;color:#505050">* - нижня третина передпліччя</div>
<div class="a" style="left:746.2px;top:245.6px;font-size:8.2px;letter-spacing:-0.2px;line-height:10px;color:#505050">100</div>
<div class="a" style="left:817.7px;top:245.6px;font-size:8.2px;letter-spacing:-0.2px;line-height:10px;color:#505050">1.56</div>
<div class="a" style="left:888.5px;top:245.6px;font-size:8.2px;letter-spacing:-0.2px;line-height:10px;color:#505050">64.00</div>
<div class="a" style="left:567px;top:364px;width:453px;height:152.5px;background:#fff;border:1px solid #e1e5ea"></div>
<div class="a" style="left:568px;top:365px;width:451px;height:14.4px;background:#edf0f4"></div>
<svg class="a" style="left:569.60px;top:363.00px" width="39.40" height="16.80" viewBox="0 0 39.40 16.80"><text x="0" y="11.41" font-family="Liberation Sans" font-size="8.4" font-weight="normal" fill="#555" textLength="39.40" lengthAdjust="spacingAndGlyphs">Description</text></svg>
<svg class="a" style="left:986.9px;top:371.0px" width="5" height="3" viewBox="0 0 5 3"><path d="M0 0 H5 L2.5 3 Z" fill="#111"/></svg><svg class="a" style="left:999.6999999999999px;top:369.3px" width="4.6" height="7" viewBox="0 0 4.6 7"><rect x="0.8" y="0.5" width="3" height="4.2" fill="none" stroke="#333" stroke-width="1.1"/><path d="M0 4.8 H4.6" stroke="#333" stroke-width="0.9"/><path d="M2.3 4.8 V7" stroke="#555" stroke-width="0.9"/><path d="M1.6 1 V4.5" stroke="#333" stroke-width="0.9"/></svg><svg class="a" style="left:1011.3px;top:369.6px" width="5.8" height="5.8" viewBox="0 0 5.8 5.8"><path d="M0.4 0.4 L5.4 5.4 M5.4 0.4 L0.4 5.4" stroke="#222" stroke-width="1.15"/></svg>
<svg class="a" style="left:576.30px;top:383.70px" width="86.50" height="18.60" viewBox="0 0 86.50 18.60"><text x="0" y="12.63" font-family="Liberation Sans" font-size="9.3" font-weight="normal" fill="#454545" textLength="86.50" lengthAdjust="spacingAndGlyphs">S, n. Radialis, (C5-C8)</text></svg>
<svg class="a" style="left:576.30px;top:395.00px" width="411.50" height="18.60" viewBox="0 0 411.50 18.60"><text x="0" y="12.63" font-family="Liberation Sans" font-size="9.3" font-weight="normal" fill="#454545" textLength="411.50" lengthAdjust="spacingAndGlyphs">Terminal latency of sensory response is 1.56 ms. An increase of 3.8% relative to the symmetrical side.</text></svg>
<svg class="a" style="left:576.30px;top:406.30px" width="128.30" height="18.60" viewBox="0 0 128.30 18.60"><text x="0" y="12.63" font-family="Liberation Sans" font-size="9.3" font-weight="normal" fill="#454545" textLength="128.30" lengthAdjust="spacingAndGlyphs">Sensory response amplitude at:</text></svg>
<svg class="a" style="left:586.30px;top:417.60px" width="168.50" height="18.60" viewBox="0 0 168.50 18.60"><text x="0" y="12.63" font-family="Liberation Sans" font-size="9.3" font-weight="normal" fill="#454545" textLength="168.50" lengthAdjust="spacingAndGlyphs">нижня третина передпліччя is 31.11 uV.</text></svg>
<svg class="a" style="left:576.30px;top:428.90px" width="161.80" height="18.60" viewBox="0 0 161.80 18.60"><text x="0" y="12.63" font-family="Liberation Sans" font-size="9.3" font-weight="normal" fill="#454545" textLength="161.80" lengthAdjust="spacingAndGlyphs">Sensory conduction speed on segment:</text></svg>
<svg class="a" style="left:585.10px;top:440.20px" width="175.70" height="18.60" viewBox="0 0 175.70 18.60"><text x="0" y="12.63" font-family="Liberation Sans" font-size="9.3" font-weight="normal" fill="#454545" textLength="175.70" lengthAdjust="spacingAndGlyphs">*-нижня третина передпліччя: 64.00 m/s.</text></svg>
</body></html>
